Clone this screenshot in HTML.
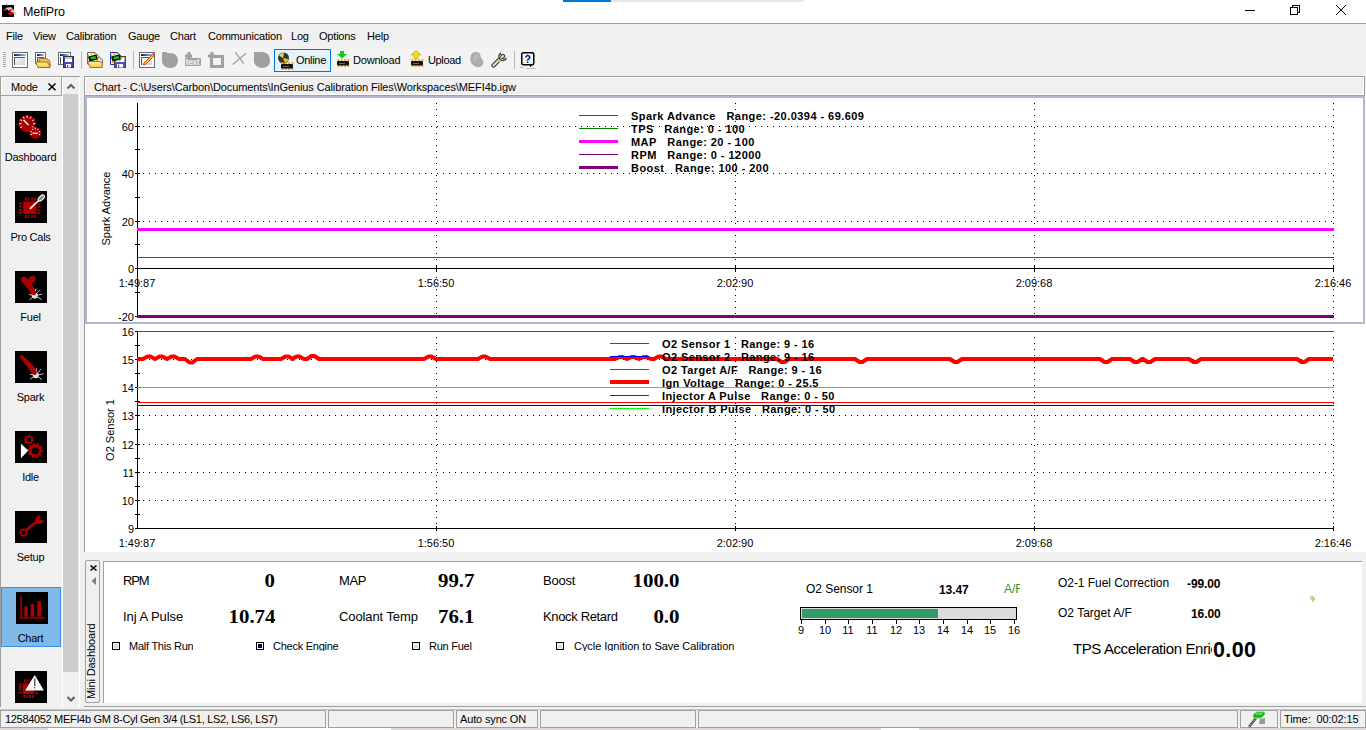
<!DOCTYPE html>
<html><head><meta charset="utf-8">
<style>
*{margin:0;padding:0;box-sizing:border-box}
html,body{width:1366px;height:730px;overflow:hidden;background:#f0f0f0;font-family:"Liberation Sans",sans-serif;font-size:11px;color:#000;position:relative}
.a{position:absolute}
.t{position:absolute;white-space:pre;line-height:1}
svg text{font-family:"Liberation Sans",sans-serif}
</style></head><body>
<div class="a" style="left:0px;top:0px;width:1366px;height:23px;background:#fff;"></div>
<div class="a" style="left:563px;top:0px;width:48px;height:2px;background:#0078d7;"></div>
<div class="a" style="left:611px;top:0px;width:193px;height:2px;background:#e6e6e6;"></div>
<div class="a" style="left:0px;top:23px;width:1366px;height:1px;background:#a0a0a0;"></div>
<div class="t" style="left:23px;top:6px;font-size:12.5px;font-weight:normal;color:#000;font-family:'Liberation Sans';letter-spacing:-0.2px;">MefiPro</div>
<svg class="a" style="left:2px;top:3px" width="16" height="15" viewBox="0 0 16 15">
<rect x="0" y="2" width="12" height="12" fill="#000"/>
<path d="M4 0 L6 3 L5 3Z" fill="#443"/>
<path d="M3 5 L9 4 L15 11 L13 12Z" fill="#ccc"/>
<path d="M1 6 L5 6 L6 7 L2 8Z M7 7 L9 6 L10 8 L8 9Z M6 10 L11 9 L12 11 L7 12Z" fill="#e00"/>
</svg>
<svg class="a" style="left:1240px;top:0" width="126" height="23" shape-rendering="crispEdges">
<rect x="5" y="10" width="10" height="1" fill="#000"/>
<rect x="50.5" y="7.5" width="7" height="7" fill="none" stroke="#000"/>
<path d="M52.5 7.5 V5.5 H59.5 V12.5 H57.5" fill="none" stroke="#000"/>
<path d="M96 5 L106 15 M106 5 L96 15" stroke="#000" stroke-width="1" shape-rendering="geometricPrecision"/>
</svg>
<div class="t" style="left:6px;top:31px;font-size:11px;font-weight:normal;color:#000;font-family:'Liberation Sans';letter-spacing:-0.2px;">File</div>
<div class="t" style="left:33px;top:31px;font-size:11px;font-weight:normal;color:#000;font-family:'Liberation Sans';letter-spacing:-0.2px;">View</div>
<div class="t" style="left:66px;top:31px;font-size:11px;font-weight:normal;color:#000;font-family:'Liberation Sans';letter-spacing:-0.2px;">Calibration</div>
<div class="t" style="left:128px;top:31px;font-size:11px;font-weight:normal;color:#000;font-family:'Liberation Sans';letter-spacing:-0.2px;">Gauge</div>
<div class="t" style="left:170px;top:31px;font-size:11px;font-weight:normal;color:#000;font-family:'Liberation Sans';letter-spacing:-0.2px;">Chart</div>
<div class="t" style="left:208px;top:31px;font-size:11px;font-weight:normal;color:#000;font-family:'Liberation Sans';letter-spacing:-0.2px;">Communication</div>
<div class="t" style="left:291px;top:31px;font-size:11px;font-weight:normal;color:#000;font-family:'Liberation Sans';letter-spacing:-0.2px;">Log</div>
<div class="t" style="left:319px;top:31px;font-size:11px;font-weight:normal;color:#000;font-family:'Liberation Sans';letter-spacing:-0.2px;">Options</div>
<div class="t" style="left:367px;top:31px;font-size:11px;font-weight:normal;color:#000;font-family:'Liberation Sans';letter-spacing:-0.2px;">Help</div>
<div class="a" style="left:1px;top:48px;width:540px;height:25px;background:#f3f3f3;"></div>
<div class="a" style="left:3px;top:52px;width:3px;height:1px;background:#a8a8a8;"></div>
<div class="a" style="left:3px;top:54px;width:3px;height:1px;background:#a8a8a8;"></div>
<div class="a" style="left:3px;top:56px;width:3px;height:1px;background:#a8a8a8;"></div>
<div class="a" style="left:3px;top:58px;width:3px;height:1px;background:#a8a8a8;"></div>
<div class="a" style="left:3px;top:60px;width:3px;height:1px;background:#a8a8a8;"></div>
<div class="a" style="left:3px;top:62px;width:3px;height:1px;background:#a8a8a8;"></div>
<div class="a" style="left:3px;top:64px;width:3px;height:1px;background:#a8a8a8;"></div>
<div class="a" style="left:3px;top:66px;width:3px;height:1px;background:#a8a8a8;"></div>
<svg class="a" style="left:0;top:44px" width="560" height="32"><defs><linearGradient id="tg" x1="0" x2="1"><stop offset="0" stop-color="#001880"/><stop offset="1" stop-color="#a8d0f8"/></linearGradient><linearGradient id="gg" x1="0" y1="0" x2="1" y2="1"><stop offset="0" stop-color="#fafafa"/><stop offset="1" stop-color="#cfcfcf"/></linearGradient><linearGradient id="yg" x1="0" y1="0" x2="0" y2="1"><stop offset="0" stop-color="#fff0a0"/><stop offset="1" stop-color="#f8c840"/></linearGradient></defs>
<g transform="translate(12,8)"><rect x="0.5" y="0.5" width="15" height="15" fill="#fff" stroke="#6a6a6a"/><rect x="2" y="2" width="12" height="2" fill="url(#tg)"/><rect x="2" y="5" width="11" height="1" fill="#555"/><rect x="2" y="5" width="1" height="8" fill="#555"/><rect x="3" y="6" width="10" height="7" fill="url(#gg)"/></g>
<g transform="translate(35,8)"><rect x="0.5" y="0.5" width="10" height="11" fill="#fff" stroke="#6a6a6a"/><rect x="2" y="2" width="7" height="2" fill="url(#tg)"/><rect x="2" y="5" width="7" height="1" fill="#555"/><rect x="2" y="5" width="1" height="5" fill="#555"/><path d="M3.5 9.5 L4.5 6.5 H11.5 L14.5 8.5 L15.5 14 L13 15.5Z" fill="#f0c040" stroke="#a07020"/><path d="M0.5 10 H12.5 L15 15.5 H3Z" fill="url(#yg)" stroke="#a07020"/></g>
<g transform="translate(58,8)"><rect x="0.5" y="0.5" width="12" height="12" fill="#fff" stroke="#6a6a6a"/><rect x="2" y="2" width="9" height="2" fill="url(#tg)"/><rect x="2" y="5" width="1" height="7" fill="#555"/><rect x="5.5" y="4.5" width="10" height="11" fill="#4848b8" stroke="#333"/><rect x="7" y="5" width="7" height="1.5" fill="#f0e000"/><rect x="7" y="6.5" width="7" height="3.5" fill="#fff"/><rect x="8" y="12" width="5" height="3.5" fill="#fff"/><rect x="9" y="13" width="1.2" height="2.5" fill="#4848b8"/></g>
<g transform="translate(87,8)"><path d="M0.5 0.5 H8 L15.5 8 V12 H0.5Z" fill="#dde4f0" stroke="#666"/><path d="M1 1 H7 L9 6 H1Z" fill="#fff"/><path d="M1 4.5 L9.5 2.5 L11 7.5 L2.5 9.5Z" fill="#000"/><path d="M3 5 L8.5 4 L9.5 6.5 L4 7.5Z" fill="#10c020"/><circle cx="1.5" cy="3.5" r="0.9" fill="#f0a000"/><circle cx="4.5" cy="2.5" r="0.9" fill="#f0a000"/><circle cx="7.5" cy="1.8" r="0.9" fill="#f0a000"/><circle cx="3" cy="10" r="0.9" fill="#f0a000"/><circle cx="6" cy="9.5" r="0.9" fill="#f0a000"/><circle cx="9.5" cy="8.5" r="0.9" fill="#f0a000"/><circle cx="11.5" cy="6" r="0.9" fill="#f0a000"/><path d="M0.5 9.5 H12.5 L15.5 11 L15 15.5 H3Z" fill="url(#yg)" stroke="#a07020"/></g>
<g transform="translate(110,8)"><path d="M0.5 0.5 H7.5 L12 5 V12.5 H0.5Z" fill="#d8ecff" stroke="#2030b0"/><rect x="4.5" y="4.5" width="11" height="11" fill="#5050c0" stroke="#444"/><rect x="6" y="5" width="8.5" height="5" fill="#fffff0"/><rect x="6" y="5" width="8.5" height="1" fill="#f0e000"/><rect x="7" y="12" width="6" height="3.5" fill="#fff"/><rect x="8" y="12.5" width="1.2" height="3" fill="#5050c0"/><path d="M1 4.5 L9.5 2.5 L11 7.5 L2.5 9.5Z" fill="#000"/><path d="M3 5 L8.5 4 L9.5 6.5 L4 7.5Z" fill="#10c020"/><circle cx="1.5" cy="3.5" r="0.9" fill="#f0a000"/><circle cx="4.5" cy="2.5" r="0.9" fill="#f0a000"/><circle cx="7.5" cy="1.8" r="0.9" fill="#f0a000"/><circle cx="3" cy="10" r="0.9" fill="#f0a000"/><circle cx="6" cy="9.5" r="0.9" fill="#f0a000"/><circle cx="9.5" cy="8.5" r="0.9" fill="#f0a000"/><circle cx="11.5" cy="6" r="0.9" fill="#f0a000"/></g>
<g transform="translate(139,8)"><rect x="0.5" y="0.5" width="15" height="15" fill="#fff" stroke="#6a6a6a"/><rect x="2" y="2" width="12" height="2" fill="url(#tg)"/><rect x="2" y="5" width="11" height="1" fill="#555"/><rect x="2" y="5" width="1" height="8" fill="#555"/><rect x="3" y="6" width="10" height="7" fill="url(#gg)"/><path d="M5 11 L13.5 2.5 L15 4 L6.5 12.5 L4.5 13Z" fill="#ffc020" stroke="#c03000" stroke-width="0.8"/><circle cx="14.8" cy="1.8" r="1.4" fill="#f040a0"/></g>
<g transform="translate(162,8)"><path d="M0 2 V0 H5 V1 H8 C13 1 16 4 16 8.5 C16 13 13 16 8 16 C4 16 0 13 0 9Z" fill="#a0a0a0"/></g>
<g transform="translate(185,8)"><rect x="2.5" y="0" width="3" height="8" fill="#a0a0a0"/><rect x="0" y="2.5" width="7" height="3" fill="#a0a0a0"/><rect x="0" y="6" width="16" height="8" rx="1" fill="#a0a0a0"/><text x="0.5" y="13" font-size="9" font-weight="bold" fill="#f0f0f0" letter-spacing="-0.6" shape-rendering="geometricPrecision">text</text></g>
<g transform="translate(208,8)"><rect x="3.5" y="4.5" width="11" height="10" fill="none" stroke="#a0a0a0" stroke-width="3"/><rect x="0" y="2.5" width="7" height="3" fill="#a0a0a0"/><rect x="2.5" y="0" width="3" height="5" fill="#a0a0a0"/></g>
<g transform="translate(230,8)"><path d="M2.7 12.6 L15.9 1.5 M5.2 0.2 L13.7 11.7" stroke="#a0a0a0" stroke-width="1.3" shape-rendering="geometricPrecision"/></g>
<g transform="translate(254,8)"><path d="M0 3 V0 H8 C13 0 16 4 16 8.5 C16 13 13 16 8 16 C4 16 0 13 0 9Z" fill="#a0a0a0"/></g>
</svg>
<div class="a" style="left:81px;top:51px;width:1px;height:18px;background:#b8b8b8;"></div>
<div class="a" style="left:133px;top:51px;width:1px;height:18px;background:#b8b8b8;"></div>
<div class="a" style="left:274px;top:49px;width:57px;height:23px;background:#e5f1fb;border:1px solid #0078d7"></div>
<svg class="a" style="left:276px;top:50px" width="20" height="20" shape-rendering="geometricPrecision"><circle cx="7.5" cy="8" r="5.5" fill="#333"/><path d="M3 5.5 A5 5 0 0 1 8 3 L7 8 Z" fill="#e8e040"/><path d="M7 8 L12.5 9 A5.5 5.5 0 0 1 9 13Z" fill="#d8d020"/><circle cx="6.5" cy="13" r="1.1" fill="#f0a020"/><circle cx="6.5" cy="19" r="1.1" fill="#f0a020"/><circle cx="9.8" cy="13" r="1.1" fill="#f0a020"/><circle cx="9.8" cy="19" r="1.1" fill="#f0a020"/><circle cx="13.1" cy="13" r="1.1" fill="#f0a020"/><circle cx="13.1" cy="19" r="1.1" fill="#f0a020"/><circle cx="16.4" cy="13" r="1.1" fill="#f0a020"/><circle cx="16.4" cy="19" r="1.1" fill="#f0a020"/><rect x="5" y="14" width="12" height="4.5" rx="1" fill="#111"/><rect x="7" y="16" width="6" height="1" fill="#666"/></svg>
<div class="t" style="left:296px;top:55px;font-size:11px;font-weight:normal;color:#000;font-family:'Liberation Sans';letter-spacing:-0.3px;">Online</div>
<svg class="a" style="left:336px;top:50px" width="16" height="20" shape-rendering="geometricPrecision"><path d="M4 1 H8 V4 H11 L6 8.5 L1 4 H4Z" fill="#10d010"/><circle cx="2.5" cy="10" r="1.1" fill="#f0a020"/><circle cx="2.5" cy="16" r="1.1" fill="#f0a020"/><circle cx="5.8" cy="10" r="1.1" fill="#f0a020"/><circle cx="5.8" cy="16" r="1.1" fill="#f0a020"/><circle cx="9.1" cy="10" r="1.1" fill="#f0a020"/><circle cx="9.1" cy="16" r="1.1" fill="#f0a020"/><circle cx="12.4" cy="10" r="1.1" fill="#f0a020"/><circle cx="12.4" cy="16" r="1.1" fill="#f0a020"/><rect x="1" y="11" width="12" height="4.5" rx="1" fill="#111"/><rect x="3" y="13" width="6" height="1" fill="#666"/></svg>
<div class="t" style="left:353px;top:55px;font-size:11px;font-weight:normal;color:#000;font-family:'Liberation Sans';letter-spacing:-0.2px;">Download</div>
<svg class="a" style="left:410px;top:50px" width="16" height="20" shape-rendering="geometricPrecision"><path d="M4 8.5 H8 V5 H11 L6 0.5 L1 5 H4Z" fill="#f0e010" stroke="#c0a000" stroke-width="0.6"/><circle cx="2.5" cy="10" r="1.1" fill="#f0a020"/><circle cx="2.5" cy="16" r="1.1" fill="#f0a020"/><circle cx="5.8" cy="10" r="1.1" fill="#f0a020"/><circle cx="5.8" cy="16" r="1.1" fill="#f0a020"/><circle cx="9.1" cy="10" r="1.1" fill="#f0a020"/><circle cx="9.1" cy="16" r="1.1" fill="#f0a020"/><circle cx="12.4" cy="10" r="1.1" fill="#f0a020"/><circle cx="12.4" cy="16" r="1.1" fill="#f0a020"/><rect x="1" y="11" width="12" height="4.5" rx="1" fill="#111"/><rect x="3" y="13" width="6" height="1" fill="#666"/></svg>
<div class="t" style="left:428px;top:55px;font-size:11px;font-weight:normal;color:#000;font-family:'Liberation Sans';letter-spacing:-0.35px;">Upload</div>
<svg class="a" style="left:468px;top:51px" width="17" height="17"><path d="M3 4 C4 1 9 0 11 2 C13 3 12 6 14 8 C16 10 16 14 13 15.5 C10 17 6 16 4 13 C2 10 2 7 3 4Z" fill="#acacac"/><path d="M5 8 L10 3 M6 10 L11 5" stroke="#d0d0d0" stroke-width="1"/></svg>
<svg class="a" style="left:491px;top:51px" width="17" height="17" shape-rendering="geometricPrecision"><path d="M2.5 14.5 L12 5" stroke="#333" stroke-width="4.2" stroke-linecap="round"/><path d="M2.5 14.5 L12 5" stroke="#e0e0e0" stroke-width="2.2" stroke-linecap="round"/><path d="M10 2.5 A3.5 3.5 0 1 0 15 7" fill="none" stroke="#333" stroke-width="2.2"/><path d="M10.5 3 A3 3 0 1 0 14.5 7" fill="none" stroke="#ddd" stroke-width="0.8"/><rect x="7" y="9" width="3" height="2" fill="#e0c020" transform="rotate(-45 8.5 10)"/></svg>
<div class="a" style="left:514px;top:51px;width:1px;height:18px;background:#b8b8b8;"></div>
<svg class="a" style="left:520px;top:51px" width="20" height="19" shape-rendering="crispEdges"><rect x="0" y="16" width="4" height="1" fill="#c0c0c0"/><rect x="6" y="17" width="10" height="1" fill="#c0c0c0"/><rect x="1.75" y="1.75" width="12" height="12" rx="1.5" fill="#fff" stroke="#000" stroke-width="1.5" shape-rendering="geometricPrecision"/><rect x="3" y="3" width="1" height="1" fill="#f0e000"/><rect x="3" y="7" width="1" height="1" fill="#f0e000"/><rect x="3" y="11" width="1" height="1" fill="#f0e000"/><rect x="5" y="5" width="1" height="1" fill="#f0e000"/><rect x="5" y="9" width="1" height="1" fill="#f0e000"/><rect x="7" y="3" width="1" height="1" fill="#f0e000"/><rect x="7" y="7" width="1" height="1" fill="#f0e000"/><rect x="7" y="11" width="1" height="1" fill="#f0e000"/><rect x="9" y="5" width="1" height="1" fill="#f0e000"/><rect x="9" y="9" width="1" height="1" fill="#f0e000"/><rect x="11" y="3" width="1" height="1" fill="#f0e000"/><rect x="11" y="7" width="1" height="1" fill="#f0e000"/><rect x="11" y="11" width="1" height="1" fill="#f0e000"/><path d="M9 13 L11 16.5 L12 13Z" fill="#000"/><text x="4.5" y="11.5" font-size="10.5" font-weight="bold" fill="#000090" shape-rendering="geometricPrecision">?</text></svg>
<div class="a" style="left:0;top:76px;width:80px;height:632px;border-left:1px solid #a0a0a0;border-top:1px solid #a0a0a0"></div>
<div class="a" style="left:62px;top:77px;width:1px;height:631px;background:#fff;"></div>
<div class="a" style="left:79px;top:77px;width:1px;height:631px;background:#fff;"></div>
<div class="a" style="left:62px;top:707px;width:18px;height:1px;background:#fff;"></div>
<div class="a" style="left:0;top:76px;width:62px;height:20px;background:#f0f0f0;border:1px solid #a0a0a0;box-shadow:inset 1px 1px 0 #fff"></div>
<div class="t" style="left:11px;top:82px;font-size:11px;font-weight:normal;color:#000;font-family:'Liberation Sans';letter-spacing:-0.2px;">Mode</div>
<svg class="a" style="left:47px;top:82px" width="11" height="10"><path d="M1.5 1.5 L8.5 8.2 M8.5 1.5 L1.5 8.2" stroke="#000" stroke-width="1.5"/></svg>
<div class="a" style="left:63px;top:94px;width:15px;height:578px;background:#cdcdcd;"></div>
<svg class="a" style="left:64px;top:80px" width="14" height="12"><path d="M3.5 8.5 L7 5 L10.5 8.5" fill="none" stroke="#606060" stroke-width="2"/></svg>
<svg class="a" style="left:64px;top:692px" width="14" height="12"><path d="M3.5 5 L7 8.5 L10.5 5" fill="none" stroke="#606060" stroke-width="2"/></svg>
<div class="a" style="left:1px;top:587px;width:60px;height:60px;background:#80bae9;border:1px solid #3b8ee6"></div>
<svg class="a" style="left:15px;top:111px" width="32" height="32" shape-rendering="geometricPrecision"><rect width="32" height="32" fill="#000"/><circle cx="12.2" cy="12.7" r="8.6" fill="#a80000"/><path d="M5.27 16.70 L7.18 15.60" stroke="#fff" stroke-width="1"/><path d="M4.20 12.70 L6.40 12.70" stroke="#fff" stroke-width="1"/><path d="M5.27 8.70 L7.18 9.80" stroke="#fff" stroke-width="1"/><path d="M8.20 5.77 L9.30 7.68" stroke="#fff" stroke-width="1"/><path d="M12.20 4.70 L12.20 6.90" stroke="#fff" stroke-width="1"/><path d="M16.20 5.77 L15.10 7.68" stroke="#fff" stroke-width="1"/><path d="M19.13 8.70 L17.22 9.80" stroke="#fff" stroke-width="1"/><path d="M20.20 12.70 L18.00 12.70" stroke="#fff" stroke-width="1"/><path d="M19.13 16.70 L17.22 15.60" stroke="#fff" stroke-width="1"/><path d="M8.5 9 L13.5 14" stroke="#fff" stroke-width="1.4"/><circle cx="20.3" cy="21.9" r="5.8" fill="#a80000"/><path d="M15.41 23.68 L16.92 23.13" stroke="#fff" stroke-width="1"/><path d="M15.32 20.41 L16.85 20.87" stroke="#fff" stroke-width="1"/><path d="M17.19 17.73 L18.15 19.01" stroke="#fff" stroke-width="1"/><path d="M20.30 16.70 L20.30 18.30" stroke="#fff" stroke-width="1"/><path d="M23.41 17.73 L22.45 19.01" stroke="#fff" stroke-width="1"/><path d="M25.28 20.41 L23.75 20.87" stroke="#fff" stroke-width="1"/><path d="M25.19 23.68 L23.68 23.13" stroke="#fff" stroke-width="1"/><rect x="17.5" y="21.5" width="5" height="1.5" fill="#ddd"/></svg>
<div class="t" style="left:0;width:61px;text-align:center;top:152px;font-size:11px;letter-spacing:-0.25px">Dashboard</div>
<svg class="a" style="left:15px;top:191px" width="32" height="32" shape-rendering="geometricPrecision"><rect width="32" height="32" fill="#000"/><rect x="8.2" y="10.4" width="13.2" height="12.6" fill="#b00000"/><rect x="9.9" y="6.4" width="1.7" height="3.2" fill="#b00000"/><rect x="12.5" y="6.4" width="1.7" height="3.2" fill="#b00000"/><rect x="16.2" y="6.4" width="1.7" height="3.2" fill="#b00000"/><rect x="19.1" y="6.4" width="1.7" height="3.2" fill="#b00000"/><rect x="9.9" y="24" width="1.7" height="3" fill="#b00000"/><rect x="12.5" y="24" width="1.7" height="3" fill="#b00000"/><rect x="16.2" y="24" width="1.7" height="3" fill="#b00000"/><rect x="19.1" y="24" width="1.7" height="3" fill="#b00000"/><rect x="3.999999999999999" y="11.8" width="3.2" height="1.7" fill="#b00000"/><rect x="3.999999999999999" y="14.7" width="3.2" height="1.7" fill="#b00000"/><rect x="3.999999999999999" y="18.4" width="3.2" height="1.7" fill="#b00000"/><rect x="3.999999999999999" y="21" width="3.2" height="1.7" fill="#b00000"/><rect x="22.2" y="11.8" width="3.2" height="1.7" fill="#b00000"/><rect x="22.2" y="14.7" width="3.2" height="1.7" fill="#b00000"/><rect x="22.2" y="18.4" width="3.2" height="1.7" fill="#b00000"/><rect x="22.2" y="21" width="3.2" height="1.7" fill="#b00000"/><path d="M15.4 17.3 L23.7 9.5" stroke="#fff" stroke-width="1.6" stroke-linecap="round"/><ellipse cx="26.3" cy="7" rx="3.8" ry="2" transform="rotate(-45 26.3 7)" fill="#888" stroke="#fff" stroke-width="1.1"/></svg>
<div class="t" style="left:0;width:61px;text-align:center;top:232px;font-size:11px;letter-spacing:-0.25px">Pro Cals</div>
<svg class="a" style="left:15px;top:271px" width="32" height="32" shape-rendering="geometricPrecision"><rect width="32" height="32" fill="#000"/><circle cx="19.7" cy="24.5" r="3" fill="#e8ecec"/><path d="M19.70 24.50 L20.92 17.61" stroke="#d0d8d8" stroke-width="0.9"/><path d="M19.70 24.50 L25.36 18.84" stroke="#d0d8d8" stroke-width="0.9"/><path d="M19.70 24.50 L27.09 23.20" stroke="#d0d8d8" stroke-width="0.9"/><path d="M19.70 24.50 L26.63 28.50" stroke="#d0d8d8" stroke-width="0.9"/><path d="M19.70 24.50 L20.22 27.45" stroke="#d0d8d8" stroke-width="0.9"/><path d="M19.70 24.50 L14.34 29.00" stroke="#d0d8d8" stroke-width="0.9"/><path d="M19.70 24.50 L13.79 23.46" stroke="#d0d8d8" stroke-width="0.9"/><path d="M19.70 24.50 L18.20 21.90" stroke="#d0d8d8" stroke-width="0.9"/><path d="M5.8 7.7 C6.5 5 10 4.8 11.8 7.2 L12.8 8.2 L14.2 7.8 C14 5.4 15.5 4.6 18 4.7 C20.5 5 21 7 20.3 9.2 C19.5 11 17.4 11.5 16.5 12.3 L20.2 19.2 C21.5 21.3 21.3 23.3 19.8 24.1 C18.4 24.8 17 23.8 16.2 22.6 L6.3 10 C5.5 9 5.5 8.3 5.8 7.7Z" fill="#a80000"/></svg>
<div class="t" style="left:0;width:61px;text-align:center;top:312px;font-size:11px;letter-spacing:-0.25px">Fuel</div>
<svg class="a" style="left:15px;top:351px" width="32" height="32" shape-rendering="geometricPrecision"><rect width="32" height="32" fill="#000"/><circle cx="20.8" cy="24.2" r="3" fill="#e8ecec"/><path d="M20.80 24.20 L21.41 17.23" stroke="#d0d8d8" stroke-width="0.9"/><path d="M20.80 24.20 L25.94 18.07" stroke="#d0d8d8" stroke-width="0.9"/><path d="M20.80 24.20 L28.68 22.81" stroke="#d0d8d8" stroke-width="0.9"/><path d="M20.80 24.20 L26.94 28.50" stroke="#d0d8d8" stroke-width="0.9"/><path d="M20.80 24.20 L21.32 27.15" stroke="#d0d8d8" stroke-width="0.9"/><path d="M20.80 24.20 L15.07 28.22" stroke="#d0d8d8" stroke-width="0.9"/><path d="M20.80 24.20 L14.89 23.16" stroke="#d0d8d8" stroke-width="0.9"/><path d="M20.80 24.20 L19.08 21.74" stroke="#d0d8d8" stroke-width="0.9"/><path d="M5.2 4.5 C6 3.6 7.3 4.1 8.3 5 L14.8 11 C17.5 13.5 20 17 21.4 20.2 C22.2 22.4 21.3 24.2 19.5 24 C18 23.8 17 22.6 16.1 21.1 L5.6 6.8 C5 6 4.8 5.1 5.2 4.5Z" fill="#b00000"/></svg>
<div class="t" style="left:0;width:61px;text-align:center;top:392px;font-size:11px;letter-spacing:-0.25px">Spark</div>
<svg class="a" style="left:15px;top:431px" width="32" height="32" shape-rendering="geometricPrecision"><rect width="32" height="32" fill="#000"/><path d="M19.10 8.90 L19.00 9.91 L17.60 10.43 L17.23 11.12 L17.58 12.58 L16.79 13.22 L15.43 12.60 L14.68 12.82 L13.90 14.10 L12.89 14.00 L12.37 12.60 L11.68 12.23 L10.22 12.58 L9.58 11.79 L10.20 10.43 L9.98 9.68 L8.70 8.90 L8.80 7.89 L10.20 7.37 L10.57 6.68 L10.22 5.22 L11.01 4.58 L12.37 5.20 L13.12 4.98 L13.90 3.70 L14.91 3.80 L15.43 5.20 L16.12 5.57 L17.58 5.22 L18.22 6.01 L17.60 7.37 L17.82 8.12Z" fill="#b00000"/><circle cx="13.9" cy="8.9" r="2.3" fill="#000"/><path d="M28.10 19.60 L28.00 20.82 L26.20 21.52 L25.82 22.41 L26.61 24.18 L25.82 25.12 L23.94 24.62 L23.11 25.12 L22.71 27.02 L21.52 27.30 L20.30 25.80 L19.33 25.72 L17.89 27.02 L16.76 26.55 L16.66 24.62 L15.92 23.98 L13.99 24.18 L13.35 23.14 L14.40 21.52 L14.18 20.57 L12.50 19.60 L12.60 18.38 L14.40 17.68 L14.78 16.79 L13.99 15.02 L14.78 14.08 L16.66 14.58 L17.49 14.08 L17.89 12.18 L19.08 11.90 L20.30 13.40 L21.27 13.48 L22.71 12.18 L23.84 12.65 L23.94 14.58 L24.68 15.22 L26.61 15.02 L27.25 16.06 L26.20 17.68 L26.42 18.63Z" fill="#b00000"/><circle cx="20.3" cy="19.6" r="3.6" fill="#000"/><path d="M5.9 12.7 L5.9 27.3 L13.3 19.6Z" fill="#fff"/></svg>
<div class="t" style="left:0;width:61px;text-align:center;top:472px;font-size:11px;letter-spacing:-0.25px">Idle</div>
<svg class="a" style="left:15px;top:511px" width="32" height="32" shape-rendering="geometricPrecision"><rect width="32" height="32" fill="#000"/><path d="M10.8 19.6 L21.5 10.8" stroke="#b00000" stroke-width="2.6"/><circle cx="8.7" cy="21.6" r="3.2" fill="none" stroke="#b00000" stroke-width="1.7"/><circle cx="24.5" cy="8.8" r="4.3" fill="#b00000"/><path d="M25.5 4.5 L24.3 8.5 L28.5 9.5 L29 4Z" fill="#000"/></svg>
<div class="t" style="left:0;width:61px;text-align:center;top:552px;font-size:11px;letter-spacing:-0.25px">Setup</div>
<svg class="a" style="left:16px;top:592px" width="32" height="32" shape-rendering="geometricPrecision"><rect width="32" height="32" fill="#000"/><path d="M5 3.5 V26 H28.5" fill="none" stroke="#a00000" stroke-width="1.6"/><rect x="8.3" y="14.4" width="3.5" height="10.3" fill="#b00000"/><rect x="14.7" y="12.1" width="3.3" height="12.6" fill="#b00000"/><rect x="21.3" y="9.2" width="3.7" height="15.5" fill="#b00000"/></svg>
<div class="t" style="left:0;width:61px;text-align:center;top:633px;font-size:11px;letter-spacing:-0.25px">Chart</div>
<svg class="a" style="left:15px;top:671px" width="32" height="32"><rect width="32" height="32" fill="#000"/><rect x="7.9" y="12.4" width="11.200000000000001" height="10.6" fill="#b00000"/><rect x="9" y="8.4" width="1.7" height="3.2" fill="#b00000"/><rect x="11.5" y="8.4" width="1.7" height="3.2" fill="#b00000"/><rect x="14.5" y="8.4" width="1.7" height="3.2" fill="#b00000"/><rect x="8.5" y="24" width="1.7" height="3" fill="#b00000"/><rect x="11" y="24" width="1.7" height="3" fill="#b00000"/><rect x="14" y="24" width="1.7" height="3" fill="#b00000"/><rect x="17" y="24" width="1.7" height="3" fill="#b00000"/><rect x="3.7" y="12.5" width="3.2" height="1.7" fill="#b00000"/><rect x="3.7" y="15" width="3.2" height="1.7" fill="#b00000"/><rect x="3.7" y="17.5" width="3.2" height="1.7" fill="#b00000"/><rect x="3.7" y="20.5" width="3.2" height="1.7" fill="#b00000"/><rect x="19.900000000000002" y="21" width="3.2" height="1.7" fill="#b00000"/><path d="M19.7 4 L10.2 19.6 H28.9Z" fill="#fff"/><rect x="19" y="7.5" width="1.4" height="7.5" fill="#555"/><rect x="19" y="16" width="1.4" height="1.4" fill="#555"/></svg>
<div class="a" style="left:84px;top:76px;width:1281px;height:20px;background:#f0f0f0;border:1px solid #a0a0a0;box-shadow:inset 1px 1px 0 #fff,inset -1px -1px 0 #fff"></div>
<div class="t" style="left:94px;top:82px;font-size:11px;font-weight:normal;color:#000;font-family:'Liberation Sans';letter-spacing:-0.11px;">Chart - C:\Users\Carbon\Documents\InGenius Calibration Files\Workspaces\MEFI4b.igw</div>
<div class="a" style="left:85px;top:96px;width:1281px;height:456px;background:#fff;"></div>
<div class="a" style="left:84px;top:96px;width:1px;height:456px;background:#a0a0a0;"></div>
<svg class="a" style="left:0;top:0" width="1366" height="730" shape-rendering="crispEdges"><path d="M143 126h1v1h-1zM149 126h1v1h-1zM155 126h1v1h-1zM161 126h1v1h-1zM167 126h1v1h-1zM173 126h1v1h-1zM179 126h1v1h-1zM185 126h1v1h-1zM191 126h1v1h-1zM197 126h1v1h-1zM203 126h1v1h-1zM209 126h1v1h-1zM215 126h1v1h-1zM221 126h1v1h-1zM227 126h1v1h-1zM233 126h1v1h-1zM239 126h1v1h-1zM245 126h1v1h-1zM251 126h1v1h-1zM257 126h1v1h-1zM263 126h1v1h-1zM269 126h1v1h-1zM275 126h1v1h-1zM281 126h1v1h-1zM287 126h1v1h-1zM293 126h1v1h-1zM299 126h1v1h-1zM305 126h1v1h-1zM311 126h1v1h-1zM317 126h1v1h-1zM323 126h1v1h-1zM329 126h1v1h-1zM335 126h1v1h-1zM341 126h1v1h-1zM347 126h1v1h-1zM353 126h1v1h-1zM359 126h1v1h-1zM365 126h1v1h-1zM371 126h1v1h-1zM377 126h1v1h-1zM383 126h1v1h-1zM389 126h1v1h-1zM395 126h1v1h-1zM401 126h1v1h-1zM407 126h1v1h-1zM413 126h1v1h-1zM419 126h1v1h-1zM425 126h1v1h-1zM431 126h1v1h-1zM437 126h1v1h-1zM443 126h1v1h-1zM449 126h1v1h-1zM455 126h1v1h-1zM461 126h1v1h-1zM467 126h1v1h-1zM473 126h1v1h-1zM479 126h1v1h-1zM485 126h1v1h-1zM491 126h1v1h-1zM497 126h1v1h-1zM503 126h1v1h-1zM509 126h1v1h-1zM515 126h1v1h-1zM521 126h1v1h-1zM527 126h1v1h-1zM533 126h1v1h-1zM539 126h1v1h-1zM545 126h1v1h-1zM551 126h1v1h-1zM557 126h1v1h-1zM563 126h1v1h-1zM569 126h1v1h-1zM575 126h1v1h-1zM581 126h1v1h-1zM587 126h1v1h-1zM593 126h1v1h-1zM599 126h1v1h-1zM605 126h1v1h-1zM611 126h1v1h-1zM617 126h1v1h-1zM623 126h1v1h-1zM629 126h1v1h-1zM635 126h1v1h-1zM641 126h1v1h-1zM647 126h1v1h-1zM653 126h1v1h-1zM659 126h1v1h-1zM665 126h1v1h-1zM671 126h1v1h-1zM677 126h1v1h-1zM683 126h1v1h-1zM689 126h1v1h-1zM695 126h1v1h-1zM701 126h1v1h-1zM707 126h1v1h-1zM713 126h1v1h-1zM719 126h1v1h-1zM725 126h1v1h-1zM731 126h1v1h-1zM737 126h1v1h-1zM743 126h1v1h-1zM749 126h1v1h-1zM755 126h1v1h-1zM761 126h1v1h-1zM767 126h1v1h-1zM773 126h1v1h-1zM779 126h1v1h-1zM785 126h1v1h-1zM791 126h1v1h-1zM797 126h1v1h-1zM803 126h1v1h-1zM809 126h1v1h-1zM815 126h1v1h-1zM821 126h1v1h-1zM827 126h1v1h-1zM833 126h1v1h-1zM839 126h1v1h-1zM845 126h1v1h-1zM851 126h1v1h-1zM857 126h1v1h-1zM863 126h1v1h-1zM869 126h1v1h-1zM875 126h1v1h-1zM881 126h1v1h-1zM887 126h1v1h-1zM893 126h1v1h-1zM899 126h1v1h-1zM905 126h1v1h-1zM911 126h1v1h-1zM917 126h1v1h-1zM923 126h1v1h-1zM929 126h1v1h-1zM935 126h1v1h-1zM941 126h1v1h-1zM947 126h1v1h-1zM953 126h1v1h-1zM959 126h1v1h-1zM965 126h1v1h-1zM971 126h1v1h-1zM977 126h1v1h-1zM983 126h1v1h-1zM989 126h1v1h-1zM995 126h1v1h-1zM1001 126h1v1h-1zM1007 126h1v1h-1zM1013 126h1v1h-1zM1019 126h1v1h-1zM1025 126h1v1h-1zM1031 126h1v1h-1zM1037 126h1v1h-1zM1043 126h1v1h-1zM1049 126h1v1h-1zM1055 126h1v1h-1zM1061 126h1v1h-1zM1067 126h1v1h-1zM1073 126h1v1h-1zM1079 126h1v1h-1zM1085 126h1v1h-1zM1091 126h1v1h-1zM1097 126h1v1h-1zM1103 126h1v1h-1zM1109 126h1v1h-1zM1115 126h1v1h-1zM1121 126h1v1h-1zM1127 126h1v1h-1zM1133 126h1v1h-1zM1139 126h1v1h-1zM1145 126h1v1h-1zM1151 126h1v1h-1zM1157 126h1v1h-1zM1163 126h1v1h-1zM1169 126h1v1h-1zM1175 126h1v1h-1zM1181 126h1v1h-1zM1187 126h1v1h-1zM1193 126h1v1h-1zM1199 126h1v1h-1zM1205 126h1v1h-1zM1211 126h1v1h-1zM1217 126h1v1h-1zM1223 126h1v1h-1zM1229 126h1v1h-1zM1235 126h1v1h-1zM1241 126h1v1h-1zM1247 126h1v1h-1zM1253 126h1v1h-1zM1259 126h1v1h-1zM1265 126h1v1h-1zM1271 126h1v1h-1zM1277 126h1v1h-1zM1283 126h1v1h-1zM1289 126h1v1h-1zM1295 126h1v1h-1zM1301 126h1v1h-1zM1307 126h1v1h-1zM1313 126h1v1h-1zM1319 126h1v1h-1zM1325 126h1v1h-1zM1331 126h1v1h-1z" fill="#000"/><path d="M143 173h1v1h-1zM149 173h1v1h-1zM155 173h1v1h-1zM161 173h1v1h-1zM167 173h1v1h-1zM173 173h1v1h-1zM179 173h1v1h-1zM185 173h1v1h-1zM191 173h1v1h-1zM197 173h1v1h-1zM203 173h1v1h-1zM209 173h1v1h-1zM215 173h1v1h-1zM221 173h1v1h-1zM227 173h1v1h-1zM233 173h1v1h-1zM239 173h1v1h-1zM245 173h1v1h-1zM251 173h1v1h-1zM257 173h1v1h-1zM263 173h1v1h-1zM269 173h1v1h-1zM275 173h1v1h-1zM281 173h1v1h-1zM287 173h1v1h-1zM293 173h1v1h-1zM299 173h1v1h-1zM305 173h1v1h-1zM311 173h1v1h-1zM317 173h1v1h-1zM323 173h1v1h-1zM329 173h1v1h-1zM335 173h1v1h-1zM341 173h1v1h-1zM347 173h1v1h-1zM353 173h1v1h-1zM359 173h1v1h-1zM365 173h1v1h-1zM371 173h1v1h-1zM377 173h1v1h-1zM383 173h1v1h-1zM389 173h1v1h-1zM395 173h1v1h-1zM401 173h1v1h-1zM407 173h1v1h-1zM413 173h1v1h-1zM419 173h1v1h-1zM425 173h1v1h-1zM431 173h1v1h-1zM437 173h1v1h-1zM443 173h1v1h-1zM449 173h1v1h-1zM455 173h1v1h-1zM461 173h1v1h-1zM467 173h1v1h-1zM473 173h1v1h-1zM479 173h1v1h-1zM485 173h1v1h-1zM491 173h1v1h-1zM497 173h1v1h-1zM503 173h1v1h-1zM509 173h1v1h-1zM515 173h1v1h-1zM521 173h1v1h-1zM527 173h1v1h-1zM533 173h1v1h-1zM539 173h1v1h-1zM545 173h1v1h-1zM551 173h1v1h-1zM557 173h1v1h-1zM563 173h1v1h-1zM569 173h1v1h-1zM575 173h1v1h-1zM581 173h1v1h-1zM587 173h1v1h-1zM593 173h1v1h-1zM599 173h1v1h-1zM605 173h1v1h-1zM611 173h1v1h-1zM617 173h1v1h-1zM623 173h1v1h-1zM629 173h1v1h-1zM635 173h1v1h-1zM641 173h1v1h-1zM647 173h1v1h-1zM653 173h1v1h-1zM659 173h1v1h-1zM665 173h1v1h-1zM671 173h1v1h-1zM677 173h1v1h-1zM683 173h1v1h-1zM689 173h1v1h-1zM695 173h1v1h-1zM701 173h1v1h-1zM707 173h1v1h-1zM713 173h1v1h-1zM719 173h1v1h-1zM725 173h1v1h-1zM731 173h1v1h-1zM737 173h1v1h-1zM743 173h1v1h-1zM749 173h1v1h-1zM755 173h1v1h-1zM761 173h1v1h-1zM767 173h1v1h-1zM773 173h1v1h-1zM779 173h1v1h-1zM785 173h1v1h-1zM791 173h1v1h-1zM797 173h1v1h-1zM803 173h1v1h-1zM809 173h1v1h-1zM815 173h1v1h-1zM821 173h1v1h-1zM827 173h1v1h-1zM833 173h1v1h-1zM839 173h1v1h-1zM845 173h1v1h-1zM851 173h1v1h-1zM857 173h1v1h-1zM863 173h1v1h-1zM869 173h1v1h-1zM875 173h1v1h-1zM881 173h1v1h-1zM887 173h1v1h-1zM893 173h1v1h-1zM899 173h1v1h-1zM905 173h1v1h-1zM911 173h1v1h-1zM917 173h1v1h-1zM923 173h1v1h-1zM929 173h1v1h-1zM935 173h1v1h-1zM941 173h1v1h-1zM947 173h1v1h-1zM953 173h1v1h-1zM959 173h1v1h-1zM965 173h1v1h-1zM971 173h1v1h-1zM977 173h1v1h-1zM983 173h1v1h-1zM989 173h1v1h-1zM995 173h1v1h-1zM1001 173h1v1h-1zM1007 173h1v1h-1zM1013 173h1v1h-1zM1019 173h1v1h-1zM1025 173h1v1h-1zM1031 173h1v1h-1zM1037 173h1v1h-1zM1043 173h1v1h-1zM1049 173h1v1h-1zM1055 173h1v1h-1zM1061 173h1v1h-1zM1067 173h1v1h-1zM1073 173h1v1h-1zM1079 173h1v1h-1zM1085 173h1v1h-1zM1091 173h1v1h-1zM1097 173h1v1h-1zM1103 173h1v1h-1zM1109 173h1v1h-1zM1115 173h1v1h-1zM1121 173h1v1h-1zM1127 173h1v1h-1zM1133 173h1v1h-1zM1139 173h1v1h-1zM1145 173h1v1h-1zM1151 173h1v1h-1zM1157 173h1v1h-1zM1163 173h1v1h-1zM1169 173h1v1h-1zM1175 173h1v1h-1zM1181 173h1v1h-1zM1187 173h1v1h-1zM1193 173h1v1h-1zM1199 173h1v1h-1zM1205 173h1v1h-1zM1211 173h1v1h-1zM1217 173h1v1h-1zM1223 173h1v1h-1zM1229 173h1v1h-1zM1235 173h1v1h-1zM1241 173h1v1h-1zM1247 173h1v1h-1zM1253 173h1v1h-1zM1259 173h1v1h-1zM1265 173h1v1h-1zM1271 173h1v1h-1zM1277 173h1v1h-1zM1283 173h1v1h-1zM1289 173h1v1h-1zM1295 173h1v1h-1zM1301 173h1v1h-1zM1307 173h1v1h-1zM1313 173h1v1h-1zM1319 173h1v1h-1zM1325 173h1v1h-1zM1331 173h1v1h-1z" fill="#000"/><path d="M143 221h1v1h-1zM149 221h1v1h-1zM155 221h1v1h-1zM161 221h1v1h-1zM167 221h1v1h-1zM173 221h1v1h-1zM179 221h1v1h-1zM185 221h1v1h-1zM191 221h1v1h-1zM197 221h1v1h-1zM203 221h1v1h-1zM209 221h1v1h-1zM215 221h1v1h-1zM221 221h1v1h-1zM227 221h1v1h-1zM233 221h1v1h-1zM239 221h1v1h-1zM245 221h1v1h-1zM251 221h1v1h-1zM257 221h1v1h-1zM263 221h1v1h-1zM269 221h1v1h-1zM275 221h1v1h-1zM281 221h1v1h-1zM287 221h1v1h-1zM293 221h1v1h-1zM299 221h1v1h-1zM305 221h1v1h-1zM311 221h1v1h-1zM317 221h1v1h-1zM323 221h1v1h-1zM329 221h1v1h-1zM335 221h1v1h-1zM341 221h1v1h-1zM347 221h1v1h-1zM353 221h1v1h-1zM359 221h1v1h-1zM365 221h1v1h-1zM371 221h1v1h-1zM377 221h1v1h-1zM383 221h1v1h-1zM389 221h1v1h-1zM395 221h1v1h-1zM401 221h1v1h-1zM407 221h1v1h-1zM413 221h1v1h-1zM419 221h1v1h-1zM425 221h1v1h-1zM431 221h1v1h-1zM437 221h1v1h-1zM443 221h1v1h-1zM449 221h1v1h-1zM455 221h1v1h-1zM461 221h1v1h-1zM467 221h1v1h-1zM473 221h1v1h-1zM479 221h1v1h-1zM485 221h1v1h-1zM491 221h1v1h-1zM497 221h1v1h-1zM503 221h1v1h-1zM509 221h1v1h-1zM515 221h1v1h-1zM521 221h1v1h-1zM527 221h1v1h-1zM533 221h1v1h-1zM539 221h1v1h-1zM545 221h1v1h-1zM551 221h1v1h-1zM557 221h1v1h-1zM563 221h1v1h-1zM569 221h1v1h-1zM575 221h1v1h-1zM581 221h1v1h-1zM587 221h1v1h-1zM593 221h1v1h-1zM599 221h1v1h-1zM605 221h1v1h-1zM611 221h1v1h-1zM617 221h1v1h-1zM623 221h1v1h-1zM629 221h1v1h-1zM635 221h1v1h-1zM641 221h1v1h-1zM647 221h1v1h-1zM653 221h1v1h-1zM659 221h1v1h-1zM665 221h1v1h-1zM671 221h1v1h-1zM677 221h1v1h-1zM683 221h1v1h-1zM689 221h1v1h-1zM695 221h1v1h-1zM701 221h1v1h-1zM707 221h1v1h-1zM713 221h1v1h-1zM719 221h1v1h-1zM725 221h1v1h-1zM731 221h1v1h-1zM737 221h1v1h-1zM743 221h1v1h-1zM749 221h1v1h-1zM755 221h1v1h-1zM761 221h1v1h-1zM767 221h1v1h-1zM773 221h1v1h-1zM779 221h1v1h-1zM785 221h1v1h-1zM791 221h1v1h-1zM797 221h1v1h-1zM803 221h1v1h-1zM809 221h1v1h-1zM815 221h1v1h-1zM821 221h1v1h-1zM827 221h1v1h-1zM833 221h1v1h-1zM839 221h1v1h-1zM845 221h1v1h-1zM851 221h1v1h-1zM857 221h1v1h-1zM863 221h1v1h-1zM869 221h1v1h-1zM875 221h1v1h-1zM881 221h1v1h-1zM887 221h1v1h-1zM893 221h1v1h-1zM899 221h1v1h-1zM905 221h1v1h-1zM911 221h1v1h-1zM917 221h1v1h-1zM923 221h1v1h-1zM929 221h1v1h-1zM935 221h1v1h-1zM941 221h1v1h-1zM947 221h1v1h-1zM953 221h1v1h-1zM959 221h1v1h-1zM965 221h1v1h-1zM971 221h1v1h-1zM977 221h1v1h-1zM983 221h1v1h-1zM989 221h1v1h-1zM995 221h1v1h-1zM1001 221h1v1h-1zM1007 221h1v1h-1zM1013 221h1v1h-1zM1019 221h1v1h-1zM1025 221h1v1h-1zM1031 221h1v1h-1zM1037 221h1v1h-1zM1043 221h1v1h-1zM1049 221h1v1h-1zM1055 221h1v1h-1zM1061 221h1v1h-1zM1067 221h1v1h-1zM1073 221h1v1h-1zM1079 221h1v1h-1zM1085 221h1v1h-1zM1091 221h1v1h-1zM1097 221h1v1h-1zM1103 221h1v1h-1zM1109 221h1v1h-1zM1115 221h1v1h-1zM1121 221h1v1h-1zM1127 221h1v1h-1zM1133 221h1v1h-1zM1139 221h1v1h-1zM1145 221h1v1h-1zM1151 221h1v1h-1zM1157 221h1v1h-1zM1163 221h1v1h-1zM1169 221h1v1h-1zM1175 221h1v1h-1zM1181 221h1v1h-1zM1187 221h1v1h-1zM1193 221h1v1h-1zM1199 221h1v1h-1zM1205 221h1v1h-1zM1211 221h1v1h-1zM1217 221h1v1h-1zM1223 221h1v1h-1zM1229 221h1v1h-1zM1235 221h1v1h-1zM1241 221h1v1h-1zM1247 221h1v1h-1zM1253 221h1v1h-1zM1259 221h1v1h-1zM1265 221h1v1h-1zM1271 221h1v1h-1zM1277 221h1v1h-1zM1283 221h1v1h-1zM1289 221h1v1h-1zM1295 221h1v1h-1zM1301 221h1v1h-1zM1307 221h1v1h-1zM1313 221h1v1h-1zM1319 221h1v1h-1zM1325 221h1v1h-1zM1331 221h1v1h-1z" fill="#000"/><path d="M436 103h1v1h-1zM436 109h1v1h-1zM436 115h1v1h-1zM436 121h1v1h-1zM436 127h1v1h-1zM436 133h1v1h-1zM436 139h1v1h-1zM436 145h1v1h-1zM436 151h1v1h-1zM436 157h1v1h-1zM436 163h1v1h-1zM436 169h1v1h-1zM436 175h1v1h-1zM436 181h1v1h-1zM436 187h1v1h-1zM436 193h1v1h-1zM436 199h1v1h-1zM436 205h1v1h-1zM436 211h1v1h-1zM436 217h1v1h-1zM436 223h1v1h-1zM436 229h1v1h-1zM436 235h1v1h-1zM436 241h1v1h-1zM436 247h1v1h-1zM436 253h1v1h-1zM436 259h1v1h-1zM436 265h1v1h-1zM436 271h1v1h-1zM436 277h1v1h-1zM436 283h1v1h-1zM436 289h1v1h-1zM436 295h1v1h-1zM436 301h1v1h-1zM436 307h1v1h-1zM436 313h1v1h-1z" fill="#000"/><path d="M735 103h1v1h-1zM735 109h1v1h-1zM735 115h1v1h-1zM735 121h1v1h-1zM735 127h1v1h-1zM735 133h1v1h-1zM735 139h1v1h-1zM735 145h1v1h-1zM735 151h1v1h-1zM735 157h1v1h-1zM735 163h1v1h-1zM735 169h1v1h-1zM735 175h1v1h-1zM735 181h1v1h-1zM735 187h1v1h-1zM735 193h1v1h-1zM735 199h1v1h-1zM735 205h1v1h-1zM735 211h1v1h-1zM735 217h1v1h-1zM735 223h1v1h-1zM735 229h1v1h-1zM735 235h1v1h-1zM735 241h1v1h-1zM735 247h1v1h-1zM735 253h1v1h-1zM735 259h1v1h-1zM735 265h1v1h-1zM735 271h1v1h-1zM735 277h1v1h-1zM735 283h1v1h-1zM735 289h1v1h-1zM735 295h1v1h-1zM735 301h1v1h-1zM735 307h1v1h-1zM735 313h1v1h-1z" fill="#000"/><path d="M1034 103h1v1h-1zM1034 109h1v1h-1zM1034 115h1v1h-1zM1034 121h1v1h-1zM1034 127h1v1h-1zM1034 133h1v1h-1zM1034 139h1v1h-1zM1034 145h1v1h-1zM1034 151h1v1h-1zM1034 157h1v1h-1zM1034 163h1v1h-1zM1034 169h1v1h-1zM1034 175h1v1h-1zM1034 181h1v1h-1zM1034 187h1v1h-1zM1034 193h1v1h-1zM1034 199h1v1h-1zM1034 205h1v1h-1zM1034 211h1v1h-1zM1034 217h1v1h-1zM1034 223h1v1h-1zM1034 229h1v1h-1zM1034 235h1v1h-1zM1034 241h1v1h-1zM1034 247h1v1h-1zM1034 253h1v1h-1zM1034 259h1v1h-1zM1034 265h1v1h-1zM1034 271h1v1h-1zM1034 277h1v1h-1zM1034 283h1v1h-1zM1034 289h1v1h-1zM1034 295h1v1h-1zM1034 301h1v1h-1zM1034 307h1v1h-1zM1034 313h1v1h-1z" fill="#000"/><path d="M1333 103h1v1h-1zM1333 109h1v1h-1zM1333 115h1v1h-1zM1333 121h1v1h-1zM1333 127h1v1h-1zM1333 133h1v1h-1zM1333 139h1v1h-1zM1333 145h1v1h-1zM1333 151h1v1h-1zM1333 157h1v1h-1zM1333 163h1v1h-1zM1333 169h1v1h-1zM1333 175h1v1h-1zM1333 181h1v1h-1zM1333 187h1v1h-1zM1333 193h1v1h-1zM1333 199h1v1h-1zM1333 205h1v1h-1zM1333 211h1v1h-1zM1333 217h1v1h-1zM1333 223h1v1h-1zM1333 229h1v1h-1zM1333 235h1v1h-1zM1333 241h1v1h-1zM1333 247h1v1h-1zM1333 253h1v1h-1zM1333 259h1v1h-1zM1333 265h1v1h-1zM1333 271h1v1h-1zM1333 277h1v1h-1zM1333 283h1v1h-1zM1333 289h1v1h-1zM1333 295h1v1h-1zM1333 301h1v1h-1zM1333 307h1v1h-1zM1333 313h1v1h-1z" fill="#000"/><rect x="137" y="103" width="1" height="214" fill="#000"/><rect x="137" y="268" width="1197" height="1" fill="#000"/><rect x="135" y="126" width="5" height="1" fill="#000"/><text x="134" y="131" font-size="11" font-weight="normal" fill="#000" text-anchor="end" >60</text><rect x="135" y="173" width="5" height="1" fill="#000"/><text x="134" y="178" font-size="11" font-weight="normal" fill="#000" text-anchor="end" >40</text><rect x="135" y="221" width="5" height="1" fill="#000"/><text x="134" y="226" font-size="11" font-weight="normal" fill="#000" text-anchor="end" >20</text><rect x="135" y="268" width="5" height="1" fill="#000"/><text x="134" y="273" font-size="11" font-weight="normal" fill="#000" text-anchor="end" >0</text><rect x="135" y="316" width="5" height="1" fill="#000"/><text x="134" y="321" font-size="11" font-weight="normal" fill="#000" text-anchor="end" >-20</text><rect x="135" y="149" width="5" height="1" fill="#000"/><rect x="135" y="197" width="5" height="1" fill="#000"/><rect x="135" y="244" width="5" height="1" fill="#000"/><rect x="135" y="292" width="5" height="1" fill="#000"/><text x="137" y="287" font-size="11" font-weight="normal" fill="#000" text-anchor="middle" >1:49:87</text><rect x="436" y="266" width="1" height="5" fill="#000"/><text x="436" y="287" font-size="11" font-weight="normal" fill="#000" text-anchor="middle" >1:56:50</text><rect x="735" y="266" width="1" height="5" fill="#000"/><text x="735" y="287" font-size="11" font-weight="normal" fill="#000" text-anchor="middle" >2:02:90</text><rect x="1034" y="266" width="1" height="5" fill="#000"/><text x="1034" y="287" font-size="11" font-weight="normal" fill="#000" text-anchor="middle" >2:09:68</text><rect x="1333" y="266" width="1" height="5" fill="#000"/><text x="1333" y="287" font-size="11" font-weight="normal" fill="#000" text-anchor="middle" >2:16:46</text><text transform="translate(110,208.5) rotate(-90)" font-size="11" text-anchor="middle">Spark Advance</text><rect x="137" y="228" width="1197" height="3" fill="#ff00ff"/><rect x="137" y="257" width="1197" height="1" fill="#ff0000"/><rect x="137" y="315" width="1197" height="3" fill="#800080"/><rect x="579" y="115" width="39" height="1" fill="#ff0000"/><text x="631" y="120" font-size="11" font-weight="bold" fill="#000" text-anchor="start" letter-spacing="0.45">Spark Advance   Range: -20.0394 - 69.609</text><rect x="579" y="128" width="39" height="1" fill="#008000"/><text x="631" y="133" font-size="11" font-weight="bold" fill="#000" text-anchor="start" letter-spacing="0.45">TPS   Range: 0 - 100</text><rect x="579" y="140" width="39" height="3" fill="#ff00ff"/><text x="631" y="146" font-size="11" font-weight="bold" fill="#000" text-anchor="start" letter-spacing="0.45">MAP   Range: 20 - 100</text><rect x="579" y="154" width="39" height="1" fill="#800080"/><text x="631" y="159" font-size="11" font-weight="bold" fill="#000" text-anchor="start" letter-spacing="0.45">RPM   Range: 0 - 12000</text><rect x="579" y="166" width="39" height="3" fill="#800080"/><text x="631" y="172" font-size="11" font-weight="bold" fill="#000" text-anchor="start" letter-spacing="0.45">Boost   Range: 100 - 200</text><rect x="86" y="97" width="1278" height="226" fill="none" stroke="#b0b9d3" stroke-width="2"/><path d="M143 359h1v1h-1zM149 359h1v1h-1zM155 359h1v1h-1zM161 359h1v1h-1zM167 359h1v1h-1zM173 359h1v1h-1zM179 359h1v1h-1zM185 359h1v1h-1zM191 359h1v1h-1zM197 359h1v1h-1zM203 359h1v1h-1zM209 359h1v1h-1zM215 359h1v1h-1zM221 359h1v1h-1zM227 359h1v1h-1zM233 359h1v1h-1zM239 359h1v1h-1zM245 359h1v1h-1zM251 359h1v1h-1zM257 359h1v1h-1zM263 359h1v1h-1zM269 359h1v1h-1zM275 359h1v1h-1zM281 359h1v1h-1zM287 359h1v1h-1zM293 359h1v1h-1zM299 359h1v1h-1zM305 359h1v1h-1zM311 359h1v1h-1zM317 359h1v1h-1zM323 359h1v1h-1zM329 359h1v1h-1zM335 359h1v1h-1zM341 359h1v1h-1zM347 359h1v1h-1zM353 359h1v1h-1zM359 359h1v1h-1zM365 359h1v1h-1zM371 359h1v1h-1zM377 359h1v1h-1zM383 359h1v1h-1zM389 359h1v1h-1zM395 359h1v1h-1zM401 359h1v1h-1zM407 359h1v1h-1zM413 359h1v1h-1zM419 359h1v1h-1zM425 359h1v1h-1zM431 359h1v1h-1zM437 359h1v1h-1zM443 359h1v1h-1zM449 359h1v1h-1zM455 359h1v1h-1zM461 359h1v1h-1zM467 359h1v1h-1zM473 359h1v1h-1zM479 359h1v1h-1zM485 359h1v1h-1zM491 359h1v1h-1zM497 359h1v1h-1zM503 359h1v1h-1zM509 359h1v1h-1zM515 359h1v1h-1zM521 359h1v1h-1zM527 359h1v1h-1zM533 359h1v1h-1zM539 359h1v1h-1zM545 359h1v1h-1zM551 359h1v1h-1zM557 359h1v1h-1zM563 359h1v1h-1zM569 359h1v1h-1zM575 359h1v1h-1zM581 359h1v1h-1zM587 359h1v1h-1zM593 359h1v1h-1zM599 359h1v1h-1zM605 359h1v1h-1zM611 359h1v1h-1zM617 359h1v1h-1zM623 359h1v1h-1zM629 359h1v1h-1zM635 359h1v1h-1zM641 359h1v1h-1zM647 359h1v1h-1zM653 359h1v1h-1zM659 359h1v1h-1zM665 359h1v1h-1zM671 359h1v1h-1zM677 359h1v1h-1zM683 359h1v1h-1zM689 359h1v1h-1zM695 359h1v1h-1zM701 359h1v1h-1zM707 359h1v1h-1zM713 359h1v1h-1zM719 359h1v1h-1zM725 359h1v1h-1zM731 359h1v1h-1zM737 359h1v1h-1zM743 359h1v1h-1zM749 359h1v1h-1zM755 359h1v1h-1zM761 359h1v1h-1zM767 359h1v1h-1zM773 359h1v1h-1zM779 359h1v1h-1zM785 359h1v1h-1zM791 359h1v1h-1zM797 359h1v1h-1zM803 359h1v1h-1zM809 359h1v1h-1zM815 359h1v1h-1zM821 359h1v1h-1zM827 359h1v1h-1zM833 359h1v1h-1zM839 359h1v1h-1zM845 359h1v1h-1zM851 359h1v1h-1zM857 359h1v1h-1zM863 359h1v1h-1zM869 359h1v1h-1zM875 359h1v1h-1zM881 359h1v1h-1zM887 359h1v1h-1zM893 359h1v1h-1zM899 359h1v1h-1zM905 359h1v1h-1zM911 359h1v1h-1zM917 359h1v1h-1zM923 359h1v1h-1zM929 359h1v1h-1zM935 359h1v1h-1zM941 359h1v1h-1zM947 359h1v1h-1zM953 359h1v1h-1zM959 359h1v1h-1zM965 359h1v1h-1zM971 359h1v1h-1zM977 359h1v1h-1zM983 359h1v1h-1zM989 359h1v1h-1zM995 359h1v1h-1zM1001 359h1v1h-1zM1007 359h1v1h-1zM1013 359h1v1h-1zM1019 359h1v1h-1zM1025 359h1v1h-1zM1031 359h1v1h-1zM1037 359h1v1h-1zM1043 359h1v1h-1zM1049 359h1v1h-1zM1055 359h1v1h-1zM1061 359h1v1h-1zM1067 359h1v1h-1zM1073 359h1v1h-1zM1079 359h1v1h-1zM1085 359h1v1h-1zM1091 359h1v1h-1zM1097 359h1v1h-1zM1103 359h1v1h-1zM1109 359h1v1h-1zM1115 359h1v1h-1zM1121 359h1v1h-1zM1127 359h1v1h-1zM1133 359h1v1h-1zM1139 359h1v1h-1zM1145 359h1v1h-1zM1151 359h1v1h-1zM1157 359h1v1h-1zM1163 359h1v1h-1zM1169 359h1v1h-1zM1175 359h1v1h-1zM1181 359h1v1h-1zM1187 359h1v1h-1zM1193 359h1v1h-1zM1199 359h1v1h-1zM1205 359h1v1h-1zM1211 359h1v1h-1zM1217 359h1v1h-1zM1223 359h1v1h-1zM1229 359h1v1h-1zM1235 359h1v1h-1zM1241 359h1v1h-1zM1247 359h1v1h-1zM1253 359h1v1h-1zM1259 359h1v1h-1zM1265 359h1v1h-1zM1271 359h1v1h-1zM1277 359h1v1h-1zM1283 359h1v1h-1zM1289 359h1v1h-1zM1295 359h1v1h-1zM1301 359h1v1h-1zM1307 359h1v1h-1zM1313 359h1v1h-1zM1319 359h1v1h-1zM1325 359h1v1h-1zM1331 359h1v1h-1z" fill="#000"/><path d="M143 387h1v1h-1zM149 387h1v1h-1zM155 387h1v1h-1zM161 387h1v1h-1zM167 387h1v1h-1zM173 387h1v1h-1zM179 387h1v1h-1zM185 387h1v1h-1zM191 387h1v1h-1zM197 387h1v1h-1zM203 387h1v1h-1zM209 387h1v1h-1zM215 387h1v1h-1zM221 387h1v1h-1zM227 387h1v1h-1zM233 387h1v1h-1zM239 387h1v1h-1zM245 387h1v1h-1zM251 387h1v1h-1zM257 387h1v1h-1zM263 387h1v1h-1zM269 387h1v1h-1zM275 387h1v1h-1zM281 387h1v1h-1zM287 387h1v1h-1zM293 387h1v1h-1zM299 387h1v1h-1zM305 387h1v1h-1zM311 387h1v1h-1zM317 387h1v1h-1zM323 387h1v1h-1zM329 387h1v1h-1zM335 387h1v1h-1zM341 387h1v1h-1zM347 387h1v1h-1zM353 387h1v1h-1zM359 387h1v1h-1zM365 387h1v1h-1zM371 387h1v1h-1zM377 387h1v1h-1zM383 387h1v1h-1zM389 387h1v1h-1zM395 387h1v1h-1zM401 387h1v1h-1zM407 387h1v1h-1zM413 387h1v1h-1zM419 387h1v1h-1zM425 387h1v1h-1zM431 387h1v1h-1zM437 387h1v1h-1zM443 387h1v1h-1zM449 387h1v1h-1zM455 387h1v1h-1zM461 387h1v1h-1zM467 387h1v1h-1zM473 387h1v1h-1zM479 387h1v1h-1zM485 387h1v1h-1zM491 387h1v1h-1zM497 387h1v1h-1zM503 387h1v1h-1zM509 387h1v1h-1zM515 387h1v1h-1zM521 387h1v1h-1zM527 387h1v1h-1zM533 387h1v1h-1zM539 387h1v1h-1zM545 387h1v1h-1zM551 387h1v1h-1zM557 387h1v1h-1zM563 387h1v1h-1zM569 387h1v1h-1zM575 387h1v1h-1zM581 387h1v1h-1zM587 387h1v1h-1zM593 387h1v1h-1zM599 387h1v1h-1zM605 387h1v1h-1zM611 387h1v1h-1zM617 387h1v1h-1zM623 387h1v1h-1zM629 387h1v1h-1zM635 387h1v1h-1zM641 387h1v1h-1zM647 387h1v1h-1zM653 387h1v1h-1zM659 387h1v1h-1zM665 387h1v1h-1zM671 387h1v1h-1zM677 387h1v1h-1zM683 387h1v1h-1zM689 387h1v1h-1zM695 387h1v1h-1zM701 387h1v1h-1zM707 387h1v1h-1zM713 387h1v1h-1zM719 387h1v1h-1zM725 387h1v1h-1zM731 387h1v1h-1zM737 387h1v1h-1zM743 387h1v1h-1zM749 387h1v1h-1zM755 387h1v1h-1zM761 387h1v1h-1zM767 387h1v1h-1zM773 387h1v1h-1zM779 387h1v1h-1zM785 387h1v1h-1zM791 387h1v1h-1zM797 387h1v1h-1zM803 387h1v1h-1zM809 387h1v1h-1zM815 387h1v1h-1zM821 387h1v1h-1zM827 387h1v1h-1zM833 387h1v1h-1zM839 387h1v1h-1zM845 387h1v1h-1zM851 387h1v1h-1zM857 387h1v1h-1zM863 387h1v1h-1zM869 387h1v1h-1zM875 387h1v1h-1zM881 387h1v1h-1zM887 387h1v1h-1zM893 387h1v1h-1zM899 387h1v1h-1zM905 387h1v1h-1zM911 387h1v1h-1zM917 387h1v1h-1zM923 387h1v1h-1zM929 387h1v1h-1zM935 387h1v1h-1zM941 387h1v1h-1zM947 387h1v1h-1zM953 387h1v1h-1zM959 387h1v1h-1zM965 387h1v1h-1zM971 387h1v1h-1zM977 387h1v1h-1zM983 387h1v1h-1zM989 387h1v1h-1zM995 387h1v1h-1zM1001 387h1v1h-1zM1007 387h1v1h-1zM1013 387h1v1h-1zM1019 387h1v1h-1zM1025 387h1v1h-1zM1031 387h1v1h-1zM1037 387h1v1h-1zM1043 387h1v1h-1zM1049 387h1v1h-1zM1055 387h1v1h-1zM1061 387h1v1h-1zM1067 387h1v1h-1zM1073 387h1v1h-1zM1079 387h1v1h-1zM1085 387h1v1h-1zM1091 387h1v1h-1zM1097 387h1v1h-1zM1103 387h1v1h-1zM1109 387h1v1h-1zM1115 387h1v1h-1zM1121 387h1v1h-1zM1127 387h1v1h-1zM1133 387h1v1h-1zM1139 387h1v1h-1zM1145 387h1v1h-1zM1151 387h1v1h-1zM1157 387h1v1h-1zM1163 387h1v1h-1zM1169 387h1v1h-1zM1175 387h1v1h-1zM1181 387h1v1h-1zM1187 387h1v1h-1zM1193 387h1v1h-1zM1199 387h1v1h-1zM1205 387h1v1h-1zM1211 387h1v1h-1zM1217 387h1v1h-1zM1223 387h1v1h-1zM1229 387h1v1h-1zM1235 387h1v1h-1zM1241 387h1v1h-1zM1247 387h1v1h-1zM1253 387h1v1h-1zM1259 387h1v1h-1zM1265 387h1v1h-1zM1271 387h1v1h-1zM1277 387h1v1h-1zM1283 387h1v1h-1zM1289 387h1v1h-1zM1295 387h1v1h-1zM1301 387h1v1h-1zM1307 387h1v1h-1zM1313 387h1v1h-1zM1319 387h1v1h-1zM1325 387h1v1h-1zM1331 387h1v1h-1z" fill="#000"/><path d="M143 415h1v1h-1zM149 415h1v1h-1zM155 415h1v1h-1zM161 415h1v1h-1zM167 415h1v1h-1zM173 415h1v1h-1zM179 415h1v1h-1zM185 415h1v1h-1zM191 415h1v1h-1zM197 415h1v1h-1zM203 415h1v1h-1zM209 415h1v1h-1zM215 415h1v1h-1zM221 415h1v1h-1zM227 415h1v1h-1zM233 415h1v1h-1zM239 415h1v1h-1zM245 415h1v1h-1zM251 415h1v1h-1zM257 415h1v1h-1zM263 415h1v1h-1zM269 415h1v1h-1zM275 415h1v1h-1zM281 415h1v1h-1zM287 415h1v1h-1zM293 415h1v1h-1zM299 415h1v1h-1zM305 415h1v1h-1zM311 415h1v1h-1zM317 415h1v1h-1zM323 415h1v1h-1zM329 415h1v1h-1zM335 415h1v1h-1zM341 415h1v1h-1zM347 415h1v1h-1zM353 415h1v1h-1zM359 415h1v1h-1zM365 415h1v1h-1zM371 415h1v1h-1zM377 415h1v1h-1zM383 415h1v1h-1zM389 415h1v1h-1zM395 415h1v1h-1zM401 415h1v1h-1zM407 415h1v1h-1zM413 415h1v1h-1zM419 415h1v1h-1zM425 415h1v1h-1zM431 415h1v1h-1zM437 415h1v1h-1zM443 415h1v1h-1zM449 415h1v1h-1zM455 415h1v1h-1zM461 415h1v1h-1zM467 415h1v1h-1zM473 415h1v1h-1zM479 415h1v1h-1zM485 415h1v1h-1zM491 415h1v1h-1zM497 415h1v1h-1zM503 415h1v1h-1zM509 415h1v1h-1zM515 415h1v1h-1zM521 415h1v1h-1zM527 415h1v1h-1zM533 415h1v1h-1zM539 415h1v1h-1zM545 415h1v1h-1zM551 415h1v1h-1zM557 415h1v1h-1zM563 415h1v1h-1zM569 415h1v1h-1zM575 415h1v1h-1zM581 415h1v1h-1zM587 415h1v1h-1zM593 415h1v1h-1zM599 415h1v1h-1zM605 415h1v1h-1zM611 415h1v1h-1zM617 415h1v1h-1zM623 415h1v1h-1zM629 415h1v1h-1zM635 415h1v1h-1zM641 415h1v1h-1zM647 415h1v1h-1zM653 415h1v1h-1zM659 415h1v1h-1zM665 415h1v1h-1zM671 415h1v1h-1zM677 415h1v1h-1zM683 415h1v1h-1zM689 415h1v1h-1zM695 415h1v1h-1zM701 415h1v1h-1zM707 415h1v1h-1zM713 415h1v1h-1zM719 415h1v1h-1zM725 415h1v1h-1zM731 415h1v1h-1zM737 415h1v1h-1zM743 415h1v1h-1zM749 415h1v1h-1zM755 415h1v1h-1zM761 415h1v1h-1zM767 415h1v1h-1zM773 415h1v1h-1zM779 415h1v1h-1zM785 415h1v1h-1zM791 415h1v1h-1zM797 415h1v1h-1zM803 415h1v1h-1zM809 415h1v1h-1zM815 415h1v1h-1zM821 415h1v1h-1zM827 415h1v1h-1zM833 415h1v1h-1zM839 415h1v1h-1zM845 415h1v1h-1zM851 415h1v1h-1zM857 415h1v1h-1zM863 415h1v1h-1zM869 415h1v1h-1zM875 415h1v1h-1zM881 415h1v1h-1zM887 415h1v1h-1zM893 415h1v1h-1zM899 415h1v1h-1zM905 415h1v1h-1zM911 415h1v1h-1zM917 415h1v1h-1zM923 415h1v1h-1zM929 415h1v1h-1zM935 415h1v1h-1zM941 415h1v1h-1zM947 415h1v1h-1zM953 415h1v1h-1zM959 415h1v1h-1zM965 415h1v1h-1zM971 415h1v1h-1zM977 415h1v1h-1zM983 415h1v1h-1zM989 415h1v1h-1zM995 415h1v1h-1zM1001 415h1v1h-1zM1007 415h1v1h-1zM1013 415h1v1h-1zM1019 415h1v1h-1zM1025 415h1v1h-1zM1031 415h1v1h-1zM1037 415h1v1h-1zM1043 415h1v1h-1zM1049 415h1v1h-1zM1055 415h1v1h-1zM1061 415h1v1h-1zM1067 415h1v1h-1zM1073 415h1v1h-1zM1079 415h1v1h-1zM1085 415h1v1h-1zM1091 415h1v1h-1zM1097 415h1v1h-1zM1103 415h1v1h-1zM1109 415h1v1h-1zM1115 415h1v1h-1zM1121 415h1v1h-1zM1127 415h1v1h-1zM1133 415h1v1h-1zM1139 415h1v1h-1zM1145 415h1v1h-1zM1151 415h1v1h-1zM1157 415h1v1h-1zM1163 415h1v1h-1zM1169 415h1v1h-1zM1175 415h1v1h-1zM1181 415h1v1h-1zM1187 415h1v1h-1zM1193 415h1v1h-1zM1199 415h1v1h-1zM1205 415h1v1h-1zM1211 415h1v1h-1zM1217 415h1v1h-1zM1223 415h1v1h-1zM1229 415h1v1h-1zM1235 415h1v1h-1zM1241 415h1v1h-1zM1247 415h1v1h-1zM1253 415h1v1h-1zM1259 415h1v1h-1zM1265 415h1v1h-1zM1271 415h1v1h-1zM1277 415h1v1h-1zM1283 415h1v1h-1zM1289 415h1v1h-1zM1295 415h1v1h-1zM1301 415h1v1h-1zM1307 415h1v1h-1zM1313 415h1v1h-1zM1319 415h1v1h-1zM1325 415h1v1h-1zM1331 415h1v1h-1z" fill="#000"/><path d="M143 444h1v1h-1zM149 444h1v1h-1zM155 444h1v1h-1zM161 444h1v1h-1zM167 444h1v1h-1zM173 444h1v1h-1zM179 444h1v1h-1zM185 444h1v1h-1zM191 444h1v1h-1zM197 444h1v1h-1zM203 444h1v1h-1zM209 444h1v1h-1zM215 444h1v1h-1zM221 444h1v1h-1zM227 444h1v1h-1zM233 444h1v1h-1zM239 444h1v1h-1zM245 444h1v1h-1zM251 444h1v1h-1zM257 444h1v1h-1zM263 444h1v1h-1zM269 444h1v1h-1zM275 444h1v1h-1zM281 444h1v1h-1zM287 444h1v1h-1zM293 444h1v1h-1zM299 444h1v1h-1zM305 444h1v1h-1zM311 444h1v1h-1zM317 444h1v1h-1zM323 444h1v1h-1zM329 444h1v1h-1zM335 444h1v1h-1zM341 444h1v1h-1zM347 444h1v1h-1zM353 444h1v1h-1zM359 444h1v1h-1zM365 444h1v1h-1zM371 444h1v1h-1zM377 444h1v1h-1zM383 444h1v1h-1zM389 444h1v1h-1zM395 444h1v1h-1zM401 444h1v1h-1zM407 444h1v1h-1zM413 444h1v1h-1zM419 444h1v1h-1zM425 444h1v1h-1zM431 444h1v1h-1zM437 444h1v1h-1zM443 444h1v1h-1zM449 444h1v1h-1zM455 444h1v1h-1zM461 444h1v1h-1zM467 444h1v1h-1zM473 444h1v1h-1zM479 444h1v1h-1zM485 444h1v1h-1zM491 444h1v1h-1zM497 444h1v1h-1zM503 444h1v1h-1zM509 444h1v1h-1zM515 444h1v1h-1zM521 444h1v1h-1zM527 444h1v1h-1zM533 444h1v1h-1zM539 444h1v1h-1zM545 444h1v1h-1zM551 444h1v1h-1zM557 444h1v1h-1zM563 444h1v1h-1zM569 444h1v1h-1zM575 444h1v1h-1zM581 444h1v1h-1zM587 444h1v1h-1zM593 444h1v1h-1zM599 444h1v1h-1zM605 444h1v1h-1zM611 444h1v1h-1zM617 444h1v1h-1zM623 444h1v1h-1zM629 444h1v1h-1zM635 444h1v1h-1zM641 444h1v1h-1zM647 444h1v1h-1zM653 444h1v1h-1zM659 444h1v1h-1zM665 444h1v1h-1zM671 444h1v1h-1zM677 444h1v1h-1zM683 444h1v1h-1zM689 444h1v1h-1zM695 444h1v1h-1zM701 444h1v1h-1zM707 444h1v1h-1zM713 444h1v1h-1zM719 444h1v1h-1zM725 444h1v1h-1zM731 444h1v1h-1zM737 444h1v1h-1zM743 444h1v1h-1zM749 444h1v1h-1zM755 444h1v1h-1zM761 444h1v1h-1zM767 444h1v1h-1zM773 444h1v1h-1zM779 444h1v1h-1zM785 444h1v1h-1zM791 444h1v1h-1zM797 444h1v1h-1zM803 444h1v1h-1zM809 444h1v1h-1zM815 444h1v1h-1zM821 444h1v1h-1zM827 444h1v1h-1zM833 444h1v1h-1zM839 444h1v1h-1zM845 444h1v1h-1zM851 444h1v1h-1zM857 444h1v1h-1zM863 444h1v1h-1zM869 444h1v1h-1zM875 444h1v1h-1zM881 444h1v1h-1zM887 444h1v1h-1zM893 444h1v1h-1zM899 444h1v1h-1zM905 444h1v1h-1zM911 444h1v1h-1zM917 444h1v1h-1zM923 444h1v1h-1zM929 444h1v1h-1zM935 444h1v1h-1zM941 444h1v1h-1zM947 444h1v1h-1zM953 444h1v1h-1zM959 444h1v1h-1zM965 444h1v1h-1zM971 444h1v1h-1zM977 444h1v1h-1zM983 444h1v1h-1zM989 444h1v1h-1zM995 444h1v1h-1zM1001 444h1v1h-1zM1007 444h1v1h-1zM1013 444h1v1h-1zM1019 444h1v1h-1zM1025 444h1v1h-1zM1031 444h1v1h-1zM1037 444h1v1h-1zM1043 444h1v1h-1zM1049 444h1v1h-1zM1055 444h1v1h-1zM1061 444h1v1h-1zM1067 444h1v1h-1zM1073 444h1v1h-1zM1079 444h1v1h-1zM1085 444h1v1h-1zM1091 444h1v1h-1zM1097 444h1v1h-1zM1103 444h1v1h-1zM1109 444h1v1h-1zM1115 444h1v1h-1zM1121 444h1v1h-1zM1127 444h1v1h-1zM1133 444h1v1h-1zM1139 444h1v1h-1zM1145 444h1v1h-1zM1151 444h1v1h-1zM1157 444h1v1h-1zM1163 444h1v1h-1zM1169 444h1v1h-1zM1175 444h1v1h-1zM1181 444h1v1h-1zM1187 444h1v1h-1zM1193 444h1v1h-1zM1199 444h1v1h-1zM1205 444h1v1h-1zM1211 444h1v1h-1zM1217 444h1v1h-1zM1223 444h1v1h-1zM1229 444h1v1h-1zM1235 444h1v1h-1zM1241 444h1v1h-1zM1247 444h1v1h-1zM1253 444h1v1h-1zM1259 444h1v1h-1zM1265 444h1v1h-1zM1271 444h1v1h-1zM1277 444h1v1h-1zM1283 444h1v1h-1zM1289 444h1v1h-1zM1295 444h1v1h-1zM1301 444h1v1h-1zM1307 444h1v1h-1zM1313 444h1v1h-1zM1319 444h1v1h-1zM1325 444h1v1h-1zM1331 444h1v1h-1z" fill="#000"/><path d="M143 472h1v1h-1zM149 472h1v1h-1zM155 472h1v1h-1zM161 472h1v1h-1zM167 472h1v1h-1zM173 472h1v1h-1zM179 472h1v1h-1zM185 472h1v1h-1zM191 472h1v1h-1zM197 472h1v1h-1zM203 472h1v1h-1zM209 472h1v1h-1zM215 472h1v1h-1zM221 472h1v1h-1zM227 472h1v1h-1zM233 472h1v1h-1zM239 472h1v1h-1zM245 472h1v1h-1zM251 472h1v1h-1zM257 472h1v1h-1zM263 472h1v1h-1zM269 472h1v1h-1zM275 472h1v1h-1zM281 472h1v1h-1zM287 472h1v1h-1zM293 472h1v1h-1zM299 472h1v1h-1zM305 472h1v1h-1zM311 472h1v1h-1zM317 472h1v1h-1zM323 472h1v1h-1zM329 472h1v1h-1zM335 472h1v1h-1zM341 472h1v1h-1zM347 472h1v1h-1zM353 472h1v1h-1zM359 472h1v1h-1zM365 472h1v1h-1zM371 472h1v1h-1zM377 472h1v1h-1zM383 472h1v1h-1zM389 472h1v1h-1zM395 472h1v1h-1zM401 472h1v1h-1zM407 472h1v1h-1zM413 472h1v1h-1zM419 472h1v1h-1zM425 472h1v1h-1zM431 472h1v1h-1zM437 472h1v1h-1zM443 472h1v1h-1zM449 472h1v1h-1zM455 472h1v1h-1zM461 472h1v1h-1zM467 472h1v1h-1zM473 472h1v1h-1zM479 472h1v1h-1zM485 472h1v1h-1zM491 472h1v1h-1zM497 472h1v1h-1zM503 472h1v1h-1zM509 472h1v1h-1zM515 472h1v1h-1zM521 472h1v1h-1zM527 472h1v1h-1zM533 472h1v1h-1zM539 472h1v1h-1zM545 472h1v1h-1zM551 472h1v1h-1zM557 472h1v1h-1zM563 472h1v1h-1zM569 472h1v1h-1zM575 472h1v1h-1zM581 472h1v1h-1zM587 472h1v1h-1zM593 472h1v1h-1zM599 472h1v1h-1zM605 472h1v1h-1zM611 472h1v1h-1zM617 472h1v1h-1zM623 472h1v1h-1zM629 472h1v1h-1zM635 472h1v1h-1zM641 472h1v1h-1zM647 472h1v1h-1zM653 472h1v1h-1zM659 472h1v1h-1zM665 472h1v1h-1zM671 472h1v1h-1zM677 472h1v1h-1zM683 472h1v1h-1zM689 472h1v1h-1zM695 472h1v1h-1zM701 472h1v1h-1zM707 472h1v1h-1zM713 472h1v1h-1zM719 472h1v1h-1zM725 472h1v1h-1zM731 472h1v1h-1zM737 472h1v1h-1zM743 472h1v1h-1zM749 472h1v1h-1zM755 472h1v1h-1zM761 472h1v1h-1zM767 472h1v1h-1zM773 472h1v1h-1zM779 472h1v1h-1zM785 472h1v1h-1zM791 472h1v1h-1zM797 472h1v1h-1zM803 472h1v1h-1zM809 472h1v1h-1zM815 472h1v1h-1zM821 472h1v1h-1zM827 472h1v1h-1zM833 472h1v1h-1zM839 472h1v1h-1zM845 472h1v1h-1zM851 472h1v1h-1zM857 472h1v1h-1zM863 472h1v1h-1zM869 472h1v1h-1zM875 472h1v1h-1zM881 472h1v1h-1zM887 472h1v1h-1zM893 472h1v1h-1zM899 472h1v1h-1zM905 472h1v1h-1zM911 472h1v1h-1zM917 472h1v1h-1zM923 472h1v1h-1zM929 472h1v1h-1zM935 472h1v1h-1zM941 472h1v1h-1zM947 472h1v1h-1zM953 472h1v1h-1zM959 472h1v1h-1zM965 472h1v1h-1zM971 472h1v1h-1zM977 472h1v1h-1zM983 472h1v1h-1zM989 472h1v1h-1zM995 472h1v1h-1zM1001 472h1v1h-1zM1007 472h1v1h-1zM1013 472h1v1h-1zM1019 472h1v1h-1zM1025 472h1v1h-1zM1031 472h1v1h-1zM1037 472h1v1h-1zM1043 472h1v1h-1zM1049 472h1v1h-1zM1055 472h1v1h-1zM1061 472h1v1h-1zM1067 472h1v1h-1zM1073 472h1v1h-1zM1079 472h1v1h-1zM1085 472h1v1h-1zM1091 472h1v1h-1zM1097 472h1v1h-1zM1103 472h1v1h-1zM1109 472h1v1h-1zM1115 472h1v1h-1zM1121 472h1v1h-1zM1127 472h1v1h-1zM1133 472h1v1h-1zM1139 472h1v1h-1zM1145 472h1v1h-1zM1151 472h1v1h-1zM1157 472h1v1h-1zM1163 472h1v1h-1zM1169 472h1v1h-1zM1175 472h1v1h-1zM1181 472h1v1h-1zM1187 472h1v1h-1zM1193 472h1v1h-1zM1199 472h1v1h-1zM1205 472h1v1h-1zM1211 472h1v1h-1zM1217 472h1v1h-1zM1223 472h1v1h-1zM1229 472h1v1h-1zM1235 472h1v1h-1zM1241 472h1v1h-1zM1247 472h1v1h-1zM1253 472h1v1h-1zM1259 472h1v1h-1zM1265 472h1v1h-1zM1271 472h1v1h-1zM1277 472h1v1h-1zM1283 472h1v1h-1zM1289 472h1v1h-1zM1295 472h1v1h-1zM1301 472h1v1h-1zM1307 472h1v1h-1zM1313 472h1v1h-1zM1319 472h1v1h-1zM1325 472h1v1h-1zM1331 472h1v1h-1z" fill="#000"/><path d="M143 500h1v1h-1zM149 500h1v1h-1zM155 500h1v1h-1zM161 500h1v1h-1zM167 500h1v1h-1zM173 500h1v1h-1zM179 500h1v1h-1zM185 500h1v1h-1zM191 500h1v1h-1zM197 500h1v1h-1zM203 500h1v1h-1zM209 500h1v1h-1zM215 500h1v1h-1zM221 500h1v1h-1zM227 500h1v1h-1zM233 500h1v1h-1zM239 500h1v1h-1zM245 500h1v1h-1zM251 500h1v1h-1zM257 500h1v1h-1zM263 500h1v1h-1zM269 500h1v1h-1zM275 500h1v1h-1zM281 500h1v1h-1zM287 500h1v1h-1zM293 500h1v1h-1zM299 500h1v1h-1zM305 500h1v1h-1zM311 500h1v1h-1zM317 500h1v1h-1zM323 500h1v1h-1zM329 500h1v1h-1zM335 500h1v1h-1zM341 500h1v1h-1zM347 500h1v1h-1zM353 500h1v1h-1zM359 500h1v1h-1zM365 500h1v1h-1zM371 500h1v1h-1zM377 500h1v1h-1zM383 500h1v1h-1zM389 500h1v1h-1zM395 500h1v1h-1zM401 500h1v1h-1zM407 500h1v1h-1zM413 500h1v1h-1zM419 500h1v1h-1zM425 500h1v1h-1zM431 500h1v1h-1zM437 500h1v1h-1zM443 500h1v1h-1zM449 500h1v1h-1zM455 500h1v1h-1zM461 500h1v1h-1zM467 500h1v1h-1zM473 500h1v1h-1zM479 500h1v1h-1zM485 500h1v1h-1zM491 500h1v1h-1zM497 500h1v1h-1zM503 500h1v1h-1zM509 500h1v1h-1zM515 500h1v1h-1zM521 500h1v1h-1zM527 500h1v1h-1zM533 500h1v1h-1zM539 500h1v1h-1zM545 500h1v1h-1zM551 500h1v1h-1zM557 500h1v1h-1zM563 500h1v1h-1zM569 500h1v1h-1zM575 500h1v1h-1zM581 500h1v1h-1zM587 500h1v1h-1zM593 500h1v1h-1zM599 500h1v1h-1zM605 500h1v1h-1zM611 500h1v1h-1zM617 500h1v1h-1zM623 500h1v1h-1zM629 500h1v1h-1zM635 500h1v1h-1zM641 500h1v1h-1zM647 500h1v1h-1zM653 500h1v1h-1zM659 500h1v1h-1zM665 500h1v1h-1zM671 500h1v1h-1zM677 500h1v1h-1zM683 500h1v1h-1zM689 500h1v1h-1zM695 500h1v1h-1zM701 500h1v1h-1zM707 500h1v1h-1zM713 500h1v1h-1zM719 500h1v1h-1zM725 500h1v1h-1zM731 500h1v1h-1zM737 500h1v1h-1zM743 500h1v1h-1zM749 500h1v1h-1zM755 500h1v1h-1zM761 500h1v1h-1zM767 500h1v1h-1zM773 500h1v1h-1zM779 500h1v1h-1zM785 500h1v1h-1zM791 500h1v1h-1zM797 500h1v1h-1zM803 500h1v1h-1zM809 500h1v1h-1zM815 500h1v1h-1zM821 500h1v1h-1zM827 500h1v1h-1zM833 500h1v1h-1zM839 500h1v1h-1zM845 500h1v1h-1zM851 500h1v1h-1zM857 500h1v1h-1zM863 500h1v1h-1zM869 500h1v1h-1zM875 500h1v1h-1zM881 500h1v1h-1zM887 500h1v1h-1zM893 500h1v1h-1zM899 500h1v1h-1zM905 500h1v1h-1zM911 500h1v1h-1zM917 500h1v1h-1zM923 500h1v1h-1zM929 500h1v1h-1zM935 500h1v1h-1zM941 500h1v1h-1zM947 500h1v1h-1zM953 500h1v1h-1zM959 500h1v1h-1zM965 500h1v1h-1zM971 500h1v1h-1zM977 500h1v1h-1zM983 500h1v1h-1zM989 500h1v1h-1zM995 500h1v1h-1zM1001 500h1v1h-1zM1007 500h1v1h-1zM1013 500h1v1h-1zM1019 500h1v1h-1zM1025 500h1v1h-1zM1031 500h1v1h-1zM1037 500h1v1h-1zM1043 500h1v1h-1zM1049 500h1v1h-1zM1055 500h1v1h-1zM1061 500h1v1h-1zM1067 500h1v1h-1zM1073 500h1v1h-1zM1079 500h1v1h-1zM1085 500h1v1h-1zM1091 500h1v1h-1zM1097 500h1v1h-1zM1103 500h1v1h-1zM1109 500h1v1h-1zM1115 500h1v1h-1zM1121 500h1v1h-1zM1127 500h1v1h-1zM1133 500h1v1h-1zM1139 500h1v1h-1zM1145 500h1v1h-1zM1151 500h1v1h-1zM1157 500h1v1h-1zM1163 500h1v1h-1zM1169 500h1v1h-1zM1175 500h1v1h-1zM1181 500h1v1h-1zM1187 500h1v1h-1zM1193 500h1v1h-1zM1199 500h1v1h-1zM1205 500h1v1h-1zM1211 500h1v1h-1zM1217 500h1v1h-1zM1223 500h1v1h-1zM1229 500h1v1h-1zM1235 500h1v1h-1zM1241 500h1v1h-1zM1247 500h1v1h-1zM1253 500h1v1h-1zM1259 500h1v1h-1zM1265 500h1v1h-1zM1271 500h1v1h-1zM1277 500h1v1h-1zM1283 500h1v1h-1zM1289 500h1v1h-1zM1295 500h1v1h-1zM1301 500h1v1h-1zM1307 500h1v1h-1zM1313 500h1v1h-1zM1319 500h1v1h-1zM1325 500h1v1h-1zM1331 500h1v1h-1z" fill="#000"/><path d="M436 337h1v1h-1zM436 343h1v1h-1zM436 349h1v1h-1zM436 355h1v1h-1zM436 361h1v1h-1zM436 367h1v1h-1zM436 373h1v1h-1zM436 379h1v1h-1zM436 385h1v1h-1zM436 391h1v1h-1zM436 397h1v1h-1zM436 403h1v1h-1zM436 409h1v1h-1zM436 415h1v1h-1zM436 421h1v1h-1zM436 427h1v1h-1zM436 433h1v1h-1zM436 439h1v1h-1zM436 445h1v1h-1zM436 451h1v1h-1zM436 457h1v1h-1zM436 463h1v1h-1zM436 469h1v1h-1zM436 475h1v1h-1zM436 481h1v1h-1zM436 487h1v1h-1zM436 493h1v1h-1zM436 499h1v1h-1zM436 505h1v1h-1zM436 511h1v1h-1zM436 517h1v1h-1zM436 523h1v1h-1z" fill="#000"/><path d="M735 337h1v1h-1zM735 343h1v1h-1zM735 349h1v1h-1zM735 355h1v1h-1zM735 361h1v1h-1zM735 367h1v1h-1zM735 373h1v1h-1zM735 379h1v1h-1zM735 385h1v1h-1zM735 391h1v1h-1zM735 397h1v1h-1zM735 403h1v1h-1zM735 409h1v1h-1zM735 415h1v1h-1zM735 421h1v1h-1zM735 427h1v1h-1zM735 433h1v1h-1zM735 439h1v1h-1zM735 445h1v1h-1zM735 451h1v1h-1zM735 457h1v1h-1zM735 463h1v1h-1zM735 469h1v1h-1zM735 475h1v1h-1zM735 481h1v1h-1zM735 487h1v1h-1zM735 493h1v1h-1zM735 499h1v1h-1zM735 505h1v1h-1zM735 511h1v1h-1zM735 517h1v1h-1zM735 523h1v1h-1z" fill="#000"/><path d="M1034 337h1v1h-1zM1034 343h1v1h-1zM1034 349h1v1h-1zM1034 355h1v1h-1zM1034 361h1v1h-1zM1034 367h1v1h-1zM1034 373h1v1h-1zM1034 379h1v1h-1zM1034 385h1v1h-1zM1034 391h1v1h-1zM1034 397h1v1h-1zM1034 403h1v1h-1zM1034 409h1v1h-1zM1034 415h1v1h-1zM1034 421h1v1h-1zM1034 427h1v1h-1zM1034 433h1v1h-1zM1034 439h1v1h-1zM1034 445h1v1h-1zM1034 451h1v1h-1zM1034 457h1v1h-1zM1034 463h1v1h-1zM1034 469h1v1h-1zM1034 475h1v1h-1zM1034 481h1v1h-1zM1034 487h1v1h-1zM1034 493h1v1h-1zM1034 499h1v1h-1zM1034 505h1v1h-1zM1034 511h1v1h-1zM1034 517h1v1h-1zM1034 523h1v1h-1z" fill="#000"/><path d="M1333 337h1v1h-1zM1333 343h1v1h-1zM1333 349h1v1h-1zM1333 355h1v1h-1zM1333 361h1v1h-1zM1333 367h1v1h-1zM1333 373h1v1h-1zM1333 379h1v1h-1zM1333 385h1v1h-1zM1333 391h1v1h-1zM1333 397h1v1h-1zM1333 403h1v1h-1zM1333 409h1v1h-1zM1333 415h1v1h-1zM1333 421h1v1h-1zM1333 427h1v1h-1zM1333 433h1v1h-1zM1333 439h1v1h-1zM1333 445h1v1h-1zM1333 451h1v1h-1zM1333 457h1v1h-1zM1333 463h1v1h-1zM1333 469h1v1h-1zM1333 475h1v1h-1zM1333 481h1v1h-1zM1333 487h1v1h-1zM1333 493h1v1h-1zM1333 499h1v1h-1zM1333 505h1v1h-1zM1333 511h1v1h-1zM1333 517h1v1h-1zM1333 523h1v1h-1z" fill="#000"/><rect x="137" y="331" width="1" height="198" fill="#000"/><rect x="137" y="528" width="1197" height="1" fill="#000"/><rect x="135" y="331" width="5" height="1" fill="#000"/><text x="134" y="336" font-size="11" font-weight="normal" fill="#000" text-anchor="end" >16</text><rect x="135" y="359" width="5" height="1" fill="#000"/><text x="134" y="364" font-size="11" font-weight="normal" fill="#000" text-anchor="end" >15</text><rect x="135" y="387" width="5" height="1" fill="#000"/><text x="134" y="392" font-size="11" font-weight="normal" fill="#000" text-anchor="end" >14</text><rect x="135" y="415" width="5" height="1" fill="#000"/><text x="134" y="420" font-size="11" font-weight="normal" fill="#000" text-anchor="end" >13</text><rect x="135" y="444" width="5" height="1" fill="#000"/><text x="134" y="449" font-size="11" font-weight="normal" fill="#000" text-anchor="end" >12</text><rect x="135" y="472" width="5" height="1" fill="#000"/><text x="134" y="477" font-size="11" font-weight="normal" fill="#000" text-anchor="end" >11</text><rect x="135" y="500" width="5" height="1" fill="#000"/><text x="134" y="505" font-size="11" font-weight="normal" fill="#000" text-anchor="end" >10</text><rect x="135" y="528" width="5" height="1" fill="#000"/><text x="134" y="533" font-size="11" font-weight="normal" fill="#000" text-anchor="end" >9</text><rect x="135" y="345" width="5" height="1" fill="#000"/><rect x="135" y="373" width="5" height="1" fill="#000"/><rect x="135" y="401" width="5" height="1" fill="#000"/><rect x="135" y="429" width="5" height="1" fill="#000"/><rect x="135" y="458" width="5" height="1" fill="#000"/><rect x="135" y="486" width="5" height="1" fill="#000"/><rect x="135" y="514" width="5" height="1" fill="#000"/><text x="137" y="547" font-size="11" font-weight="normal" fill="#000" text-anchor="middle" >1:49:87</text><rect x="436" y="526" width="1" height="5" fill="#000"/><text x="436" y="547" font-size="11" font-weight="normal" fill="#000" text-anchor="middle" >1:56:50</text><rect x="735" y="526" width="1" height="5" fill="#000"/><text x="735" y="547" font-size="11" font-weight="normal" fill="#000" text-anchor="middle" >2:02:90</text><rect x="1034" y="526" width="1" height="5" fill="#000"/><text x="1034" y="547" font-size="11" font-weight="normal" fill="#000" text-anchor="middle" >2:09:68</text><rect x="1333" y="526" width="1" height="5" fill="#000"/><text x="1333" y="547" font-size="11" font-weight="normal" fill="#000" text-anchor="middle" >2:16:46</text><text transform="translate(114,430) rotate(-90)" font-size="11" text-anchor="middle">O2 Sensor 1</text><rect x="137" y="331" width="1197" height="1" fill="#008000"/><rect x="137" y="387" width="1197" height="1" fill="#00ff00"/><rect x="137" y="402" width="1197" height="1" fill="#ff0000"/><rect x="137" y="405" width="1197" height="1" fill="#0000ff"/><path d="M137 359 L143 359 L147.5 356.5 L150.5 356.5 L155 359 L155 359 L159.5 356.5 L162.5 356.5 L167 359 L167 359 L171.5 356.5 L174.5 356.5 L179 359 L185 359 L189.5 362.5 L192.5 362.5 L197 359 L251 359 L255.5 356.5 L258.5 356.5 L263 359 L281 359 L285.5 356.5 L288.5 356.5 L293 359 L292 359 L296.5 356.5 L299.5 356.5 L304 359 L307 359 L311.5 356 L314.5 356 L319 359 L424 359 L428.5 356.5 L431.5 356.5 L436 359 L478 359 L482.5 356.5 L485.5 356.5 L490 359 L615 359 L619.5 357 L622.5 357 L627 359 L627 359 L631.5 357 L634.5 357 L639 359 L639 359 L643.5 357 L646.5 357 L651 359 L654 359 L658.5 356.5 L661.5 356.5 L666 359 L777 359 L781.5 362 L784.5 362 L789 359 L855 359 L859.5 362 L862.5 362 L867 359 L950 359 L954.5 362 L957.5 362 L962 359 L1100 359 L1104.5 362 L1107.5 362 L1112 359 L1130 359 L1134.5 362 L1137.5 362 L1142 359 L1143 359 L1147.5 362 L1150.5 362 L1155 359 L1189 359 L1193.5 362 L1196.5 362 L1201 359 L1297 359 L1301.5 362 L1304.5 362 L1309 359 L1333 359" fill="none" stroke="#ff0000" stroke-width="4" stroke-linejoin="round" shape-rendering="geometricPrecision"/><rect x="610" y="343" width="39" height="1" fill="#ff0000"/><text x="662" y="348" font-size="11" font-weight="bold" fill="#000" text-anchor="start" letter-spacing="0.4">O2 Sensor 1   Range: 9 - 16</text><rect x="610" y="356" width="39" height="1" fill="#0000ff"/><text x="662" y="361" font-size="11" font-weight="bold" fill="#000" text-anchor="start" letter-spacing="0.4">O2 Sensor 2   Range: 9 - 16</text><rect x="610" y="369" width="39" height="1" fill="#008000"/><text x="662" y="374" font-size="11" font-weight="bold" fill="#000" text-anchor="start" letter-spacing="0.4">O2 Target A/F   Range: 9 - 16</text><rect x="610" y="380" width="39" height="4" fill="#ff0000"/><text x="662" y="387" font-size="11" font-weight="bold" fill="#000" text-anchor="start" letter-spacing="0.4">Ign Voltage   Range: 0 - 25.5</text><rect x="610" y="395" width="39" height="1" fill="#800080"/><text x="662" y="400" font-size="11" font-weight="bold" fill="#000" text-anchor="start" letter-spacing="0.4">Injector A Pulse   Range: 0 - 50</text><rect x="610" y="408" width="39" height="1" fill="#00ff00"/><text x="662" y="413" font-size="11" font-weight="bold" fill="#000" text-anchor="start" letter-spacing="0.4">Injector B Pulse   Range: 0 - 50</text></svg>
<div class="a" style="left:84px;top:552px;width:1282px;height:154px;background:#f0f0f0;"></div>
<div class="a" style="left:85px;top:560px;width:15px;height:143px;background:#f0f0f0;border:1px solid #a0a0a0;border-radius:2px"></div>
<svg class="a" style="left:89px;top:564px" width="9" height="8"><path d="M1.5 1.5 L7.5 6.5 M7.5 1.5 L1.5 6.5" stroke="#000" stroke-width="1.6"/></svg>
<svg class="a" style="left:91px;top:577px" width="6" height="9"><path d="M5 0 V8 L0.5 4Z" fill="#808080"/></svg>
<div class="t" style="left:86px;top:699px;font-size:11px;transform:rotate(-90deg);transform-origin:0 0;letter-spacing:-0.1px">Mini Dashboard</div>
<div class="a" style="left:103px;top:561px;width:1259px;height:142px;background:#fff;border-left:1px solid #a0a0a0;border-top:1px solid #a0a0a0"></div>
<div class="a" style="left:84px;top:706px;width:1282px;height:1px;background:#a0a0a0;"></div>
<div class="t" style="left:123px;top:574px;font-size:13px;font-weight:normal;color:#000;font-family:'Liberation Sans';letter-spacing:-1.2px;">RPM</div>
<div class="t" style="right:1091px;top:572px;font-size:18px;font-weight:bold;font-family:'Liberation Serif';letter-spacing:0px;transform:scaleX(1.16);transform-origin:100% 0">0</div>
<div class="t" style="left:123px;top:610px;font-size:13px;font-weight:normal;color:#000;font-family:'Liberation Sans';letter-spacing:-0.05px;">Inj A Pulse</div>
<div class="t" style="right:1091px;top:608px;font-size:18px;font-weight:bold;font-family:'Liberation Serif';letter-spacing:0px;transform:scaleX(1.16);transform-origin:100% 0">10.74</div>
<div class="t" style="left:339px;top:574px;font-size:13px;font-weight:normal;color:#000;font-family:'Liberation Sans';letter-spacing:-0.4px;">MAP</div>
<div class="t" style="right:892px;top:572px;font-size:18px;font-weight:bold;font-family:'Liberation Serif';letter-spacing:0px;transform:scaleX(1.16);transform-origin:100% 0">99.7</div>
<div class="t" style="left:339px;top:610px;font-size:13px;font-weight:normal;color:#000;font-family:'Liberation Sans';letter-spacing:-0.1px;">Coolant Temp</div>
<div class="t" style="right:892px;top:608px;font-size:18px;font-weight:bold;font-family:'Liberation Serif';letter-spacing:0px;transform:scaleX(1.16);transform-origin:100% 0">76.1</div>
<div class="t" style="left:543px;top:574px;font-size:13px;font-weight:normal;color:#000;font-family:'Liberation Sans';letter-spacing:-0.2px;">Boost</div>
<div class="t" style="right:687px;top:572px;font-size:18px;font-weight:bold;font-family:'Liberation Serif';letter-spacing:0px;transform:scaleX(1.16);transform-origin:100% 0">100.0</div>
<div class="t" style="left:543px;top:610px;font-size:13px;font-weight:normal;color:#000;font-family:'Liberation Sans';letter-spacing:-0.35px;">Knock Retard</div>
<div class="t" style="right:687px;top:608px;font-size:18px;font-weight:bold;font-family:'Liberation Serif';letter-spacing:0px;transform:scaleX(1.16);transform-origin:100% 0">0.0</div>
<div class="a" style="left:112px;top:642px;width:8px;height:8px;border:1px solid #000;background:#dcdcdc;box-shadow:inset 0 0 0 1px #f0f0f0"></div>
<div class="t" style="left:129px;top:641px;height:10px;overflow:hidden;font-size:11px;letter-spacing:-0.25px">Malf This Run</div>
<div class="a" style="left:256px;top:642px;width:8px;height:8px;border:1px solid #000;background:#fff"></div>
<div class="a" style="left:258px;top:644px;width:4px;height:4px;background:#000;"></div>
<div class="a" style="left:259px;top:645px;width:2px;height:2px;background:#0000ff;"></div>
<div class="t" style="left:273px;top:641px;height:10px;overflow:hidden;font-size:11px;letter-spacing:-0.25px">Check Engine</div>
<div class="a" style="left:412px;top:642px;width:8px;height:8px;border:1px solid #000;background:#dcdcdc;box-shadow:inset 0 0 0 1px #f0f0f0"></div>
<div class="t" style="left:429px;top:641px;height:10px;overflow:hidden;font-size:11px;letter-spacing:-0.25px">Run Fuel</div>
<div class="a" style="left:556px;top:642px;width:8px;height:8px;border:1px solid #000;background:#dcdcdc;box-shadow:inset 0 0 0 1px #f0f0f0"></div>
<div class="t" style="left:574px;top:641px;height:10px;overflow:hidden;font-size:11px;letter-spacing:-0.05px">Cycle Ignition to Save Calibration</div>
<div class="t" style="left:806px;top:583px;font-size:12px;font-weight:normal;color:#000;font-family:'Liberation Sans';letter-spacing:-0.05px;">O2 Sensor 1</div>
<div class="t" style="left:939px;top:584px;font-size:12px;font-weight:bold;color:#000;font-family:'Liberation Sans';letter-spacing:-0.1px;">13.47</div>
<div class="t" style="left:1004px;top:583px;width:16px;overflow:hidden;font-size:12px;color:#2a9a2a">A/F</div>
<div class="a" style="left:800px;top:607px;width:217px;height:13px;border:1px solid #000;background:#dcdcdc"></div>
<div class="a" style="left:802px;top:609px;width:136px;height:9px;background:#339966;"></div>
<div class="a" style="left:801px;top:620px;width:1px;height:4px;background:#000;"></div>
<div class="t" style="left:781px;width:40px;text-align:center;top:625px;font-size:11px">9</div>
<div class="a" style="left:825px;top:620px;width:1px;height:4px;background:#000;"></div>
<div class="t" style="left:805px;width:40px;text-align:center;top:625px;font-size:11px">10</div>
<div class="a" style="left:848px;top:620px;width:1px;height:4px;background:#000;"></div>
<div class="t" style="left:828px;width:40px;text-align:center;top:625px;font-size:11px">11</div>
<div class="a" style="left:872px;top:620px;width:1px;height:4px;background:#000;"></div>
<div class="t" style="left:852px;width:40px;text-align:center;top:625px;font-size:11px">11</div>
<div class="a" style="left:896px;top:620px;width:1px;height:4px;background:#000;"></div>
<div class="t" style="left:876px;width:40px;text-align:center;top:625px;font-size:11px">12</div>
<div class="a" style="left:919px;top:620px;width:1px;height:4px;background:#000;"></div>
<div class="t" style="left:899px;width:40px;text-align:center;top:625px;font-size:11px">13</div>
<div class="a" style="left:943px;top:620px;width:1px;height:4px;background:#000;"></div>
<div class="t" style="left:923px;width:40px;text-align:center;top:625px;font-size:11px">14</div>
<div class="a" style="left:967px;top:620px;width:1px;height:4px;background:#000;"></div>
<div class="t" style="left:947px;width:40px;text-align:center;top:625px;font-size:11px">14</div>
<div class="a" style="left:990px;top:620px;width:1px;height:4px;background:#000;"></div>
<div class="t" style="left:970px;width:40px;text-align:center;top:625px;font-size:11px">15</div>
<div class="a" style="left:1014px;top:620px;width:1px;height:4px;background:#000;"></div>
<div class="t" style="left:994px;width:40px;text-align:center;top:625px;font-size:11px">16</div>
<div class="t" style="left:1058px;top:577px;font-size:12px;font-weight:normal;color:#000;font-family:'Liberation Sans';letter-spacing:-0.05px;">O2-1 Fuel Correction</div>
<div class="t" style="left:1187px;top:578px;font-size:12px;font-weight:bold;color:#000;font-family:'Liberation Sans';letter-spacing:-0.1px;">-99.00</div>
<div class="t" style="left:1058px;top:607px;font-size:12px;font-weight:normal;color:#000;font-family:'Liberation Sans';letter-spacing:0px;">O2 Target A/F</div>
<div class="t" style="left:1191px;top:608px;font-size:12px;font-weight:bold;color:#000;font-family:'Liberation Sans';letter-spacing:-0.1px;">16.00</div>
<div class="t" style="left:1310px;top:595px;width:5px;overflow:hidden;font-size:9px;color:#2a9a2a">%</div>
<div class="t" style="left:1073px;top:641px;width:139px;overflow:hidden;font-size:15px;letter-spacing:-0.4px">TPS Acceleration Enrichment</div>
<div class="t" style="left:1213px;top:640px;font-size:21.5px;font-weight:bold;color:#000;font-family:'Liberation Sans';letter-spacing:0.4px;">0.00</div>
<div class="a" style="left:0px;top:707px;width:1366px;height:23px;background:#f0f0f0;"></div>
<div class="a" style="left:0px;top:709px;width:1366px;height:1px;background:#c8c8c8;"></div>
<div class="a" style="left:0px;top:710px;width:326px;height:18px;border:1px solid #a0a0a0;border-right-color:#a0a0a0"></div>
<div class="a" style="left:328px;top:710px;width:126px;height:18px;border:1px solid #a0a0a0;border-right-color:#a0a0a0"></div>
<div class="a" style="left:456px;top:710px;width:82px;height:18px;border:1px solid #a0a0a0;border-right-color:#a0a0a0"></div>
<div class="a" style="left:540px;top:710px;width:156px;height:18px;border:1px solid #a0a0a0;border-right-color:#a0a0a0"></div>
<div class="a" style="left:698px;top:710px;width:540px;height:18px;border:1px solid #a0a0a0;border-right-color:#a0a0a0"></div>
<div class="a" style="left:1240px;top:710px;width:38px;height:18px;border:1px solid #a0a0a0;border-right-color:#a0a0a0"></div>
<div class="a" style="left:1280px;top:710px;width:86px;height:18px;border:1px solid #a0a0a0;border-right-color:#a0a0a0"></div>
<div class="t" style="left:5px;top:714px;font-size:11px;font-weight:normal;color:#000;font-family:'Liberation Sans';letter-spacing:-0.32px;">12584052 MEFI4b GM 8-Cyl Gen 3/4 (LS1, LS2, LS6, LS7)</div>
<div class="t" style="left:460px;top:714px;font-size:11px;font-weight:normal;color:#000;font-family:'Liberation Sans';letter-spacing:-0.15px;">Auto sync ON</div>
<div class="t" style="left:1284px;top:714px;font-size:11px;font-weight:normal;color:#000;font-family:'Liberation Sans';letter-spacing:-0.1px;">Time:  00:02:15</div>
<svg class="a" style="left:1245px;top:710px" width="24" height="18" shape-rendering="geometricPrecision"><path d="M15 9 L20 8 L20 14 L14 14Z" fill="#999"/><path d="M4 17 L11 8" stroke="#444" stroke-width="2.4"/><path d="M4 17 L11 8" stroke="#eee" stroke-width="0.8" stroke-dasharray="1.5 1"/><path d="M8 5 L12 2 H19 L20 4 L16 8 H9Z" fill="#20b020" stroke="#50e050" stroke-width="1"/><path d="M11 4 H17" stroke="#a0f0a0" stroke-width="1"/></svg>
<div class="a" style="left:0px;top:728px;width:1366px;height:2px;background:#e0d8d8;"></div>
<div class="a" style="left:48px;top:728px;width:343px;height:2px;background:#ffffff;"></div>
<div class="a" style="left:881px;top:728px;width:38px;height:2px;background:#ffffff;"></div>
</body></html>
